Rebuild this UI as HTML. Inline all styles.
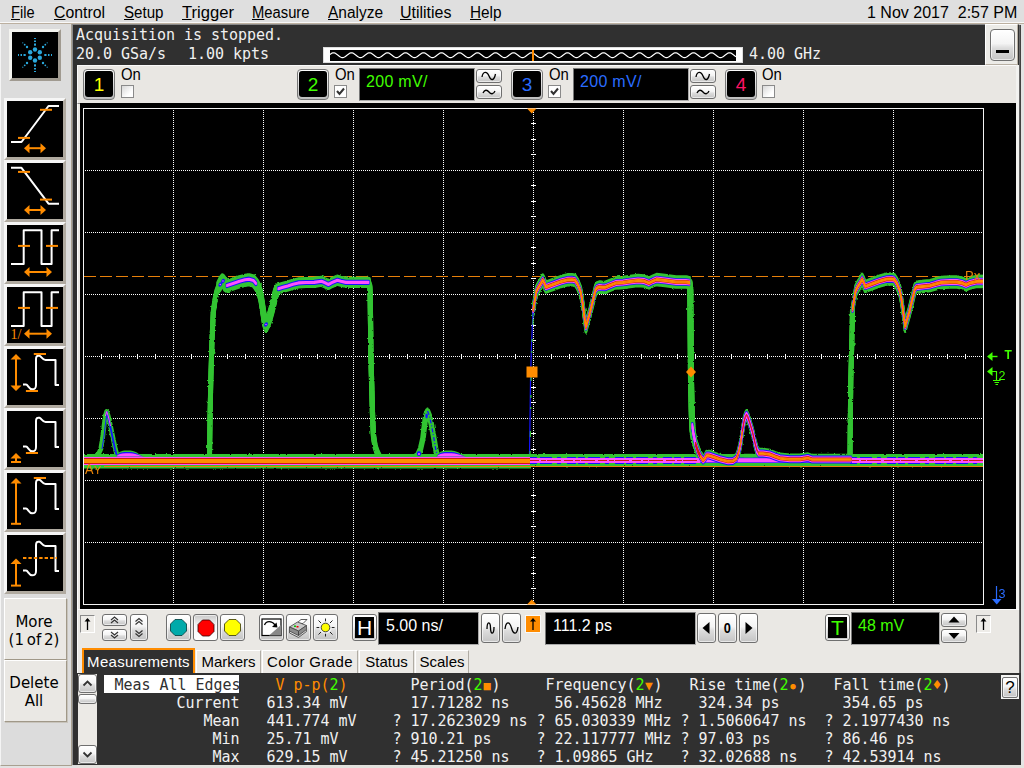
<!DOCTYPE html>
<html lang="en">
<head>
<meta charset="utf-8">
<title>Oscilloscope</title>
<style>
html,body{margin:0;padding:0;}
body{width:1024px;height:768px;overflow:hidden;background:#dcdcdc;position:relative;
 font-family:"Liberation Sans","DejaVu Sans",sans-serif;font-size:16px;color:#000;}
.a{position:absolute;box-sizing:border-box;}
.mono{font-family:"DejaVu Sans Mono","Liberation Mono",monospace;font-size:15px;white-space:pre;letter-spacing:-0.0308px;}
.menu{position:absolute;top:3px;height:20px;line-height:20px;font-size:16px;white-space:nowrap;transform-origin:0 50%;}
.menu u{text-decoration:underline;text-underline-offset:1px;text-decoration-thickness:1px;}
.btn{position:absolute;box-sizing:border-box;border:1px solid #6f6f6f;border-radius:3px;
 background:linear-gradient(#ffffff 0%,#f4f4f4 45%,#dcdcdc 60%,#c4c4c4 100%);box-shadow:inset 0 0 0 1px rgba(255,255,255,.6);}
.chbtn{position:absolute;box-sizing:border-box;width:32px;height:31px;border-radius:4px;border:1px solid #777;
 background:linear-gradient(#fdfdfd,#bdbdbd);}
.chbtn i{position:absolute;left:1px;top:1px;right:1px;bottom:2px;background:#000;border-radius:3px;display:block;
 font-style:normal;text-align:center;font-size:19px;line-height:28px;}
.on{position:absolute;font-size:16px;line-height:16px;transform:scaleX(.93);transform-origin:0 0;margin-top:0px;}
.cb{position:absolute;box-sizing:border-box;width:13px;height:13px;border:1px solid #8a8a8a;background:linear-gradient(135deg,#d8d8d8,#ffffff 70%);}
.cb.ck{background:#fff;}
.vbox{position:absolute;box-sizing:border-box;background:#000;border-top:1px solid #777;border-left:1px solid #777;border-right:1px solid #aaa;border-bottom:1px solid #aaa;
 font-size:16px;line-height:20px;white-space:nowrap;}
.sb{position:absolute;box-sizing:border-box;left:4px;width:62px;height:62px;border-style:solid;border-width:3px;border-color:#f6f6f6 #b0aaa0 #b0aaa0 #f6f6f6;background:#000;}
.tbtn{position:absolute;box-sizing:border-box;left:4px;width:63px;padding-right:3px;border-style:solid;border-width:1px 1px 1px 1px;border-color:#fff #a09888 #a09888 #fff;background:#eae8e4;box-shadow:1px 1px 0 #c8c4bc;
 font-family:"DejaVu Sans","Liberation Sans",sans-serif;font-size:15px;text-align:center;line-height:18px;}
.tab{position:absolute;box-sizing:border-box;top:650px;height:23px;background:#eceae6;border:1px solid #b0aca4;border-bottom:none;border-top-color:#fff;border-left-color:#fff;
 font-size:15px;line-height:21px;text-align:center;white-space:nowrap;}
.sunk{position:absolute;box-sizing:border-box;border-style:solid;border-width:1px;border-color:#8a8a8a #fff #fff #8a8a8a;background:#eeece8;}
.sym{display:inline-block;width:9px;text-align:center;font-size:12px;line-height:10px;vertical-align:baseline}
.g{color:#40ff00}.o{color:#ff8c00}.w{color:#f0f0f0}
</style>
</head>
<body>

<!-- menu bar -->
<div class="a" style="left:0;top:0;width:1024px;height:24px;background:#dfdfdf;border-bottom:1px solid #bcb0a0;"></div><div class="a" style="left:0;top:22px;width:1024px;height:1px;background:#f8f8f8;"></div>
<div class="menu" style="left:11px;transform:scaleX(0.911)"><u>F</u>ile</div>
<div class="menu" style="left:53.5px;transform:scaleX(0.988)"><u>C</u>ontrol</div>
<div class="menu" style="left:123.5px;transform:scaleX(0.945)"><u>S</u>etup</div>
<div class="menu" style="left:181.5px;transform:scaleX(1.038)"><u>T</u>rigger</div>
<div class="menu" style="left:251.5px;transform:scaleX(0.924)"><u>M</u>easure</div>
<div class="menu" style="left:327.5px;transform:scaleX(0.967)"><u>A</u>nalyze</div>
<div class="menu" style="left:400px;transform:scaleX(0.998)"><u>U</u>tilities</div>
<div class="menu" style="left:470px;transform:scaleX(0.957)"><u>H</u>elp</div>
<div class="menu" id="clock" style="left:867px">1 Nov 2017&nbsp; 2:57 PM</div>

<!-- left sidebar -->
<div class="a" style="left:0;top:24px;width:72px;height:742px;background:#dcdcdc;border-left:1px solid #f4f4f4;border-right:1px solid #a8a090;border-bottom:1px solid #a8a090;"></div>
<div class="a" style="left:0;top:766px;width:1024px;height:2px;background:#e2e2e2;"></div>
<div class="a" style="left:72px;top:24px;width:1px;height:741px;background:#8c8c8c;"></div>
<div class="a" style="left:77px;top:65px;width:3px;height:700px;background:#ebe9e5;border-left:1px solid #fcfcfc;"></div>
<div class="a" style="left:73px;top:24px;width:4px;height:741px;background:#303030;"></div>
<!-- logo -->
<div class="a" style="left:9px;top:29px;width:52px;height:52px;border-style:solid;border-width:3px;border-color:#f4f4f0 #a09a90 #a09a90 #f4f4f0;background:#000;">
<svg width="46" height="46" viewBox="0 0 46 46" style="position:absolute;left:0;top:0">
<g fill="#2aa8dc">
<circle cx="23" cy="17.5" r="2.2"/><circle cx="23" cy="28.5" r="2.2"/>
<circle cx="18.2" cy="20.2" r="2.2"/><circle cx="27.8" cy="20.2" r="2.2"/>
<circle cx="18.2" cy="25.8" r="2.2"/><circle cx="27.8" cy="25.8" r="2.2"/>
<rect x="22" y="11.5" width="2" height="2.2"/><rect x="22" y="8.5" width="2" height="1.5"/><rect x="22" y="6" width="2" height="1"/>
<rect x="22" y="32.3" width="2" height="2.2"/><rect x="22" y="36" width="2" height="1.5"/><rect x="22" y="39" width="2" height="1"/>
<rect x="11.5" y="22" width="2.2" height="2"/><rect x="8.5" y="22" width="1.5" height="2"/><rect x="6" y="22" width="1" height="2"/>
<rect x="32.3" y="22" width="2.2" height="2"/><rect x="36" y="22" width="1.5" height="2"/><rect x="39" y="22" width="1" height="2"/>
<circle cx="15" cy="15" r="1.2"/><circle cx="12.7" cy="12.7" r="0.9"/><circle cx="10.8" cy="10.8" r="0.6"/>
<circle cx="31" cy="15" r="1.2"/><circle cx="33.3" cy="12.7" r="0.9"/><circle cx="35.2" cy="10.8" r="0.6"/>
<circle cx="15" cy="31" r="1.2"/><circle cx="12.7" cy="33.3" r="0.9"/><circle cx="10.8" cy="35.2" r="0.6"/>
<circle cx="31" cy="31" r="1.2"/><circle cx="33.3" cy="33.3" r="0.9"/><circle cx="35.2" cy="35.2" r="0.6"/>
</g></svg></div>

<div class="sb" style="top:98px"><svg width="56" height="56" viewBox="0 0 56 56" style="position:absolute;left:0;top:0"><path d="M4 41H14.5L41.5 5H52" stroke="#fff" stroke-width="2" fill="none" stroke-linejoin="round"/><path d="M33 8.8H45" stroke="#ff8c00" stroke-width="2" fill="none"/><path d="M11 36.9H23" stroke="#ff8c00" stroke-width="2" fill="none"/><path d="M21 47.2H35" stroke="#ff8c00" stroke-width="2" fill="none"/><path d="M17 47.2l5.5 -5v10zM39 47.2l-5.5 -5v10z" fill="#ff8c00"/></svg></div>
<div class="sb" style="top:160px"><svg width="56" height="56" viewBox="0 0 56 56" style="position:absolute;left:0;top:0"><path d="M4 4.8H14.5L41.5 40.7H52" stroke="#fff" stroke-width="2" fill="none" stroke-linejoin="round"/><path d="M11 8.9H23" stroke="#ff8c00" stroke-width="2" fill="none"/><path d="M33 36.6H45" stroke="#ff8c00" stroke-width="2" fill="none"/><path d="M21 47H35" stroke="#ff8c00" stroke-width="2" fill="none"/><path d="M17 47l5.5 -5v10zM39 47l-5.5 -5v10z" fill="#ff8c00"/></svg></div>
<div class="sb" style="top:222px"><svg width="56" height="56" viewBox="0 0 56 56" style="position:absolute;left:0;top:0"><path d="M4 39H16.7V5.2H34.5V39H44.6V5.2H52" stroke="#fff" stroke-width="2" fill="none" stroke-linejoin="round"/><path d="M11 20.9H23" stroke="#ff8c00" stroke-width="2" fill="none"/><path d="M39 20.9H51" stroke="#ff8c00" stroke-width="2" fill="none"/><path d="M21 47H41" stroke="#ff8c00" stroke-width="2" fill="none"/><path d="M17 47l5.5 -5v10zM45 47l-5.5 -5v10z" fill="#ff8c00"/></svg></div>
<div class="sb" style="top:284px"><svg width="56" height="56" viewBox="0 0 56 56" style="position:absolute;left:0;top:0"><path d="M4 39H16.7V5.2H34.5V39H44.6V5.2H52" stroke="#fff" stroke-width="2" fill="none" stroke-linejoin="round"/><path d="M11 20.9H23" stroke="#ff8c00" stroke-width="2" fill="none"/><path d="M39 20.9H51" stroke="#ff8c00" stroke-width="2" fill="none"/><path d="M21 46.7H41" stroke="#ff8c00" stroke-width="2" fill="none"/><path d="M17 46.7l5.5 -5v10zM45 46.7l-5.5 -5v10z" fill="#ff8c00"/><text x="3.5" y="51.5" font-family="Liberation Serif,serif" font-size="14" fill="#ff8c00">1/</text></svg></div>
<div class="sb" style="top:346px"><svg width="56" height="56" viewBox="0 0 56 56" style="position:absolute;left:0;top:0"><path d="M16 35.6H19C21 35.6 22 40.3 25 40.3C28 40.3 29 39.5 29 36V10C29 7 30.5 6.3 32.5 6.8C34.5 7.3 35.5 11 38.5 11H48.5V36H52" stroke="#fff" stroke-width="2" fill="none" stroke-linejoin="round"/><path d="M26.8 5H39" stroke="#ff8c00" stroke-width="2" fill="none"/><path d="M18.9 42H31" stroke="#ff8c00" stroke-width="2" fill="none"/><path d="M9 8V39" stroke="#ff8c00" stroke-width="2" fill="none"/><path d="M9 5l5.5 5.5h-11zM9 42l5.5 -5.5h-11z" fill="#ff8c00"/></svg></div>
<div class="sb" style="top:408px"><svg width="56" height="56" viewBox="0 0 56 56" style="position:absolute;left:0;top:0"><path d="M16 35.6H19C21 35.6 22 40.3 25 40.3C28 40.3 29 39.5 29 36V10C29 7 30.5 6.3 32.5 6.8C34.5 7.3 35.5 11 38.5 11H48.5V36H52" stroke="#fff" stroke-width="2" fill="none" stroke-linejoin="round"/><path d="M18.9 42H31" stroke="#ff8c00" stroke-width="2" fill="none"/><path d="M9 45V51" stroke="#ff8c00" stroke-width="2" fill="none"/><path d="M9 42l5.5 5.5h-11z" fill="#ff8c00"/><path d="M4 51h10" stroke="#ff8c00" stroke-width="2" fill="none"/></svg></div>
<div class="sb" style="top:470px"><svg width="56" height="56" viewBox="0 0 56 56" style="position:absolute;left:0;top:0"><path d="M16 35.6H19C21 35.6 22 40.3 25 40.3C28 40.3 29 39.5 29 36V10C29 7 30.5 6.3 32.5 6.8C34.5 7.3 35.5 11 38.5 11H48.5V36H52" stroke="#fff" stroke-width="2" fill="none" stroke-linejoin="round"/><path d="M26.8 5H39" stroke="#ff8c00" stroke-width="2" fill="none"/><path d="M9 8V50.8" stroke="#ff8c00" stroke-width="2" fill="none"/><path d="M9 5l5.5 5.5h-11z" fill="#ff8c00"/><path d="M4 50.8h10" stroke="#ff8c00" stroke-width="2" fill="none"/></svg></div>
<div class="sb" style="top:532px"><svg width="56" height="56" viewBox="0 0 56 56" style="position:absolute;left:0;top:0"><path d="M16 35.6H19C21 35.6 22 40.3 25 40.3C28 40.3 29 39.5 29 36V10C29 7 30.5 6.3 32.5 6.8C34.5 7.3 35.5 11 38.5 11H48.5V36H52" stroke="#fff" stroke-width="2" fill="none" stroke-linejoin="round"/><path d="M16 23H50" stroke="#ff8c00" stroke-width="2" stroke-dasharray="3.4 2" fill="none"/><path d="M9 26.5V50.6" stroke="#ff8c00" stroke-width="2" fill="none"/><path d="M9 23.5l5.5 5.5h-11z" fill="#ff8c00"/><path d="M4 50.6h10" stroke="#ff8c00" stroke-width="2" fill="none"/></svg></div>
<!-- More / Delete buttons -->
<div class="tbtn" style="top:598px;height:62px;padding-top:14px;line-height:18px;word-spacing:-2px">More<br>(1 of 2)</div>
<div class="tbtn" style="top:660px;height:62px;padding-top:13px;line-height:18px">Delete<br>All</div>

<!-- status area -->
<div class="a" style="left:73px;top:24px;width:946px;height:41px;background:#303030;border-top:1px solid #8a8a8a;"></div>
<div class="a mono w" style="left:76px;top:26px;line-height:19px;">Acquisition is stopped.
20.0 GSa/s</div>
<div class="a mono w" style="left:188px;top:45px;line-height:19px;">1.00 kpts</div>
<div class="a" style="left:323px;top:47px;width:420px;height:16px;background:#fff;border:1px solid #ddd;"></div>
<div class="a" style="left:330px;top:50px;width:406px;height:11px;background:#000;overflow:hidden">
<svg width="406" height="11" viewBox="0 0 406 11" style="position:absolute;left:0;top:0"><path d="M0 4.4 L1 3.7 L2 3.1 L3 2.8 L4 2.8 L5 3.1 L6 3.7 L7 4.4 L8 5.2 L9 6.0 L10 6.7 L11 7.3 L12 7.6 L13 7.6 L14 7.3 L15 6.7 L16 6.0 L17 5.2 L18 4.4 L19 3.7 L20 3.1 L21 2.8 L22 2.8 L23 3.1 L24 3.7 L25 4.4 L26 5.2 L27 6.0 L28 6.7 L29 7.3 L30 7.6 L31 7.6 L32 7.3 L33 6.7 L34 6.0 L35 5.2 L36 4.4 L37 3.7 L38 3.1 L39 2.8 L40 2.8 L41 3.1 L42 3.7 L43 4.4 L44 5.2 L45 6.0 L46 6.7 L47 7.3 L48 7.6 L49 7.6 L50 7.3 L51 6.7 L52 6.0 L53 5.2 L54 4.4 L55 3.7 L56 3.1 L57 2.8 L58 2.8 L59 3.1 L60 3.7 L61 4.4 L62 5.2 L63 6.0 L64 6.7 L65 7.3 L66 7.6 L67 7.6 L68 7.3 L69 6.7 L70 6.0 L71 5.2 L72 4.4 L73 3.7 L74 3.1 L75 2.8 L76 2.8 L77 3.1 L78 3.7 L79 4.4 L80 5.2 L81 6.0 L82 6.7 L83 7.3 L84 7.6 L85 7.6 L86 7.3 L87 6.7 L88 6.0 L89 5.2 L90 4.4 L91 3.7 L92 3.1 L93 2.8 L94 2.8 L95 3.1 L96 3.7 L97 4.4 L98 5.2 L99 6.0 L100 6.7 L101 7.3 L102 7.6 L103 7.6 L104 7.3 L105 6.7 L106 6.0 L107 5.2 L108 4.4 L109 3.7 L110 3.1 L111 2.8 L112 2.8 L113 3.1 L114 3.7 L115 4.4 L116 5.2 L117 6.0 L118 6.7 L119 7.3 L120 7.6 L121 7.6 L122 7.3 L123 6.7 L124 6.0 L125 5.2 L126 4.4 L127 3.7 L128 3.1 L129 2.8 L130 2.8 L131 3.1 L132 3.7 L133 4.4 L134 5.2 L135 6.0 L136 6.7 L137 7.3 L138 7.6 L139 7.6 L140 7.3 L141 6.7 L142 6.0 L143 5.2 L144 4.4 L145 3.7 L146 3.1 L147 2.8 L148 2.8 L149 3.1 L150 3.7 L151 4.4 L152 5.2 L153 6.0 L154 6.7 L155 7.3 L156 7.6 L157 7.6 L158 7.3 L159 6.7 L160 6.0 L161 5.2 L162 4.4 L163 3.7 L164 3.1 L165 2.8 L166 2.8 L167 3.1 L168 3.7 L169 4.4 L170 5.2 L171 6.0 L172 6.7 L173 7.3 L174 7.6 L175 7.6 L176 7.3 L177 6.7 L178 6.0 L179 5.2 L180 4.4 L181 3.7 L182 3.1 L183 2.8 L184 2.8 L185 3.1 L186 3.7 L187 4.4 L188 5.2 L189 6.0 L190 6.7 L191 7.3 L192 7.6 L193 7.6 L194 7.3 L195 6.7 L196 6.0 L197 5.2 L198 4.4 L199 3.7 L200 3.1 L201 2.8 L202 2.8 L203 3.1 L204 3.7 L205 4.4 L206 5.2 L207 6.0 L208 6.7 L209 7.3 L210 7.6 L211 7.6 L212 7.3 L213 6.7 L214 6.0 L215 5.2 L216 4.4 L217 3.7 L218 3.1 L219 2.8 L220 2.8 L221 3.1 L222 3.7 L223 4.4 L224 5.2 L225 6.0 L226 6.7 L227 7.3 L228 7.6 L229 7.6 L230 7.3 L231 6.7 L232 6.0 L233 5.2 L234 4.4 L235 3.7 L236 3.1 L237 2.8 L238 2.8 L239 3.1 L240 3.7 L241 4.4 L242 5.2 L243 6.0 L244 6.7 L245 7.3 L246 7.6 L247 7.6 L248 7.3 L249 6.7 L250 6.0 L251 5.2 L252 4.4 L253 3.7 L254 3.1 L255 2.8 L256 2.8 L257 3.1 L258 3.7 L259 4.4 L260 5.2 L261 6.0 L262 6.7 L263 7.3 L264 7.6 L265 7.6 L266 7.3 L267 6.7 L268 6.0 L269 5.2 L270 4.4 L271 3.7 L272 3.1 L273 2.8 L274 2.8 L275 3.1 L276 3.7 L277 4.4 L278 5.2 L279 6.0 L280 6.7 L281 7.3 L282 7.6 L283 7.6 L284 7.3 L285 6.7 L286 6.0 L287 5.2 L288 4.4 L289 3.7 L290 3.1 L291 2.8 L292 2.8 L293 3.1 L294 3.7 L295 4.4 L296 5.2 L297 6.0 L298 6.7 L299 7.3 L300 7.6 L301 7.6 L302 7.3 L303 6.7 L304 6.0 L305 5.2 L306 4.4 L307 3.7 L308 3.1 L309 2.8 L310 2.8 L311 3.1 L312 3.7 L313 4.4 L314 5.2 L315 6.0 L316 6.7 L317 7.3 L318 7.6 L319 7.6 L320 7.3 L321 6.7 L322 6.0 L323 5.2 L324 4.4 L325 3.7 L326 3.1 L327 2.8 L328 2.8 L329 3.1 L330 3.7 L331 4.4 L332 5.2 L333 6.0 L334 6.7 L335 7.3 L336 7.6 L337 7.6 L338 7.3 L339 6.7 L340 6.0 L341 5.2 L342 4.4 L343 3.7 L344 3.1 L345 2.8 L346 2.8 L347 3.1 L348 3.7 L349 4.4 L350 5.2 L351 6.0 L352 6.7 L353 7.3 L354 7.6 L355 7.6 L356 7.3 L357 6.7 L358 6.0 L359 5.2 L360 4.4 L361 3.7 L362 3.1 L363 2.8 L364 2.8 L365 3.1 L366 3.7 L367 4.4 L368 5.2 L369 6.0 L370 6.7 L371 7.3 L372 7.6 L373 7.6 L374 7.3 L375 6.7 L376 6.0 L377 5.2 L378 4.4 L379 3.7 L380 3.1 L381 2.8 L382 2.8 L383 3.1 L384 3.7 L385 4.4 L386 5.2 L387 6.0 L388 6.7 L389 7.3 L390 7.6 L391 7.6 L392 7.3 L393 6.7 L394 6.0 L395 5.2 L396 4.4 L397 3.7 L398 3.1 L399 2.8 L400 2.8 L401 3.1 L402 3.7 L403 4.4 L404 5.2 L405 6.0 L406 6.7" stroke="#fff" stroke-width="1.2" fill="none"/><rect x="202" y="0" width="2" height="11" fill="#ff8c00"/></svg></div>
<div class="a mono w" style="left:749px;top:45px;line-height:19px;">4.00 GHz</div>
<!-- minimize button -->
<div class="a" style="left:985px;top:24px;width:33px;height:41px;background:#ecebe7;border:1px solid #b8b0a4;border-top-color:#fff;border-left-color:#fff"></div>
<div class="btn" style="left:990px;top:29px;width:25px;height:32px;border-radius:4px"><div class="a" style="left:5px;top:20px;width:13px;height:3px;background:#000"></div></div>
<!-- right edge strips -->
<div class="a" style="left:1016px;top:65px;width:3px;height:703px;background:#f2f2f0;"></div>
<div class="a" style="left:1019px;top:25px;width:2px;height:740px;background:linear-gradient(90deg,#777,#303030);"></div>
<div class="a" style="left:1021px;top:24px;width:3px;height:744px;background:#e4e4e4;"></div>

<!-- channel row -->
<div class="a" style="left:77px;top:65px;width:939px;height:39px;background:#e9e7e3;border-top:1px solid #fafafa;border-left:1px solid #fafafa;border-bottom:1px solid #888;"></div>
<div class="chbtn" style="left:83px;top:69px"><i style="color:#ffff00">1</i></div>
<div class="on" style="left:121px;top:67px">On</div><div class="cb" style="left:121px;top:85px"></div>

<div class="chbtn" style="left:297px;top:69px"><i class="g">2</i></div>
<div class="on" style="left:334.5px;top:67px">On</div><div class="cb ck" style="left:334px;top:85px"><svg width="11" height="11" viewBox="0 0 11 11" style="position:absolute;left:0;top:0"><path d="M2 5l2.5 3L9 2.5" stroke="#333" stroke-width="2" fill="none"/></svg></div>
<div class="vbox g" style="left:359px;top:68px;width:116px;height:33px;padding:3px 0 0 6px;letter-spacing:.3px">200 mV/</div>
<div class="btn" style="left:476px;top:69px;width:26px;height:14px"><svg width="24" height="12" viewBox="0 0 24 12" style="position:absolute;left:0;top:0"><path d="M5 7C6 1 10 1 12 6C14 11 17 11 18.5 4" stroke="#000" stroke-width="1.3" fill="none"/></svg></div>
<div class="btn" style="left:476px;top:85px;width:26px;height:14px"><svg width="24" height="12" viewBox="0 0 24 12" style="position:absolute;left:0;top:0"><path d="M6 7C7.5 3.5 10 3.5 12 6C14 8.5 16.5 8.5 18 5" stroke="#000" stroke-width="1.3" fill="none"/></svg></div>

<div class="chbtn" style="left:511px;top:69px"><i style="color:#2a6cff">3</i></div>
<div class="on" style="left:548.5px;top:67px">On</div><div class="cb ck" style="left:548px;top:85px"><svg width="11" height="11" viewBox="0 0 11 11" style="position:absolute;left:0;top:0"><path d="M2 5l2.5 3L9 2.5" stroke="#333" stroke-width="2" fill="none"/></svg></div>
<div class="vbox" style="left:573px;top:68px;width:116px;height:33px;padding:3px 0 0 6px;color:#2a6cff;letter-spacing:.3px">200 mV/</div>
<div class="btn" style="left:690px;top:69px;width:26px;height:14px"><svg width="24" height="12" viewBox="0 0 24 12" style="position:absolute;left:0;top:0"><path d="M5 7C6 1 10 1 12 6C14 11 17 11 18.5 4" stroke="#000" stroke-width="1.3" fill="none"/></svg></div>
<div class="btn" style="left:690px;top:85px;width:26px;height:14px"><svg width="24" height="12" viewBox="0 0 24 12" style="position:absolute;left:0;top:0"><path d="M6 7C7.5 3.5 10 3.5 12 6C14 8.5 16.5 8.5 18 5" stroke="#000" stroke-width="1.3" fill="none"/></svg></div>

<div class="chbtn" style="left:725px;top:69px"><i style="color:#ff1464">4</i></div>
<div class="on" style="left:762px;top:67px">On</div><div class="cb" style="left:762px;top:85px"></div>

<svg class="a" style="left:80px;top:103px" width="936" height="506" viewBox="80 103 936 506" shape-rendering="auto">
<defs><clipPath id="gc"><rect x="84" y="109" width="899" height="495"/></clipPath><filter id="rough" x="-2%" y="-2%" width="104%" height="104%"><feTurbulence type="fractalNoise" baseFrequency="0.35" numOctaves="2" seed="3" result="n"/><feDisplacementMap in="SourceGraphic" in2="n" scale="2.4" xChannelSelector="R" yChannelSelector="G"/></filter></defs>
<rect x="80" y="103" width="936" height="506" fill="#000"/>
<g stroke="#ffffff" stroke-width="1" stroke-dasharray="1 1" fill="none" shape-rendering="crispEdges"><path d="M173.5 108V604"/><path d="M263.5 108V604"/><path d="M353.5 108V604"/><path d="M443.5 108V604"/><path d="M533.5 108V604"/><path d="M623.5 108V604"/><path d="M713.5 108V604"/><path d="M803.5 108V604"/><path d="M893.5 108V604"/><path d="M83 170.5H983"/><path d="M83 232.5H983"/><path d="M83 294.5H983"/><path d="M83 356.5H983"/><path d="M83 418.5H983"/><path d="M83 480.5H983"/><path d="M83 542.5H983"/></g>
<g stroke="#ffffff" stroke-width="1" fill="none" shape-rendering="crispEdges"><path d="M101.5 354V359"/><path d="M119.5 354V359"/><path d="M137.5 354V359"/><path d="M155.5 354V359"/><path d="M191.5 354V359"/><path d="M209.5 354V359"/><path d="M227.5 354V359"/><path d="M245.5 354V359"/><path d="M281.5 354V359"/><path d="M299.5 354V359"/><path d="M317.5 354V359"/><path d="M335.5 354V359"/><path d="M371.5 354V359"/><path d="M389.5 354V359"/><path d="M407.5 354V359"/><path d="M425.5 354V359"/><path d="M461.5 354V359"/><path d="M479.5 354V359"/><path d="M497.5 354V359"/><path d="M515.5 354V359"/><path d="M551.5 354V359"/><path d="M569.5 354V359"/><path d="M587.5 354V359"/><path d="M605.5 354V359"/><path d="M641.5 354V359"/><path d="M659.5 354V359"/><path d="M677.5 354V359"/><path d="M695.5 354V359"/><path d="M731.5 354V359"/><path d="M749.5 354V359"/><path d="M767.5 354V359"/><path d="M785.5 354V359"/><path d="M821.5 354V359"/><path d="M839.5 354V359"/><path d="M857.5 354V359"/><path d="M875.5 354V359"/><path d="M911.5 354V359"/><path d="M929.5 354V359"/><path d="M947.5 354V359"/><path d="M965.5 354V359"/><path d="M531 123.5H536"/><path d="M531 139.5H536"/><path d="M531 154.5H536"/><path d="M531 185.5H536"/><path d="M531 201.5H536"/><path d="M531 216.5H536"/><path d="M531 247.5H536"/><path d="M531 263.5H536"/><path d="M531 278.5H536"/><path d="M531 309.5H536"/><path d="M531 325.5H536"/><path d="M531 340.5H536"/><path d="M531 371.5H536"/><path d="M531 387.5H536"/><path d="M531 402.5H536"/><path d="M531 433.5H536"/><path d="M531 449.5H536"/><path d="M531 464.5H536"/><path d="M531 495.5H536"/><path d="M531 511.5H536"/><path d="M531 526.5H536"/><path d="M531 557.5H536"/><path d="M531 573.5H536"/><path d="M531 588.5H536"/></g>
<rect x="83.5" y="108.5" width="900" height="496" fill="none" stroke="#f4f4f4" stroke-width="1" shape-rendering="crispEdges"/>
<path d="M84 276.5H983" stroke="#e8800a" stroke-width="1" stroke-dasharray="12 4" shape-rendering="crispEdges"/>
<g clip-path="url(#gc)">
<g filter="url(#rough)">
<rect x="80" y="454" width="451" height="14.5" fill="#33c433"/>
<rect x="529" y="454" width="172" height="12.5" fill="#33c433"/>
<rect x="849" y="454" width="140" height="12.500" fill="#33c433"/>
<rect x="699" y="454" width="152" height="12.5" fill="#33c433"/>
<g stroke="#33c433" stroke-width="2.6" fill="none" stroke-linejoin="round" stroke-linecap="round" ><path d="M692.3 426 L693.5 434 L695.5 444 L698 451.5 L700.5 456.5 L703 460.5 L705 458.5 L706.5 455.5 L709 455.5 L712 456.5 L720 459.3 L728 461.3 L733 461 L736.5 458.5 L738.5 453 L740.5 444 L742.3 432 L744 421.5 L745.3 417 L746.5 414.8 L747.8 417 L749.8 423 L752.5 432 L755 443 L757 450.5 L759 453.5 L763 453.5 L770 454.5 L775 456.5 L780 458.3 L790 459.3 L800 459.3 L808 458 L812 459.5 L830 459.5 L851 459.5" transform="translate(0 -4.4)"/><path d="M692.3 426 L693.5 434 L695.5 444 L698 451.5 L700.5 456.5 L703 460.5 L705 458.5 L706.5 455.5 L709 455.5 L712 456.5 L720 459.3 L728 461.3 L733 461 L736.5 458.5 L738.5 453 L740.5 444 L742.3 432 L744 421.5 L745.3 417 L746.5 414.8 L747.8 417 L749.8 423 L752.5 432 L755 443 L757 450.5 L759 453.5 L763 453.5 L770 454.5 L775 456.5 L780 458.3 L790 459.3 L800 459.3 L808 458 L812 459.5 L830 459.5 L851 459.5" transform="translate(0 -3.42222)"/><path d="M692.3 426 L693.5 434 L695.5 444 L698 451.5 L700.5 456.5 L703 460.5 L705 458.5 L706.5 455.5 L709 455.5 L712 456.5 L720 459.3 L728 461.3 L733 461 L736.5 458.5 L738.5 453 L740.5 444 L742.3 432 L744 421.5 L745.3 417 L746.5 414.8 L747.8 417 L749.8 423 L752.5 432 L755 443 L757 450.5 L759 453.5 L763 453.5 L770 454.5 L775 456.5 L780 458.3 L790 459.3 L800 459.3 L808 458 L812 459.5 L830 459.5 L851 459.5" transform="translate(0 -2.44444)"/><path d="M692.3 426 L693.5 434 L695.5 444 L698 451.5 L700.5 456.5 L703 460.5 L705 458.5 L706.5 455.5 L709 455.5 L712 456.5 L720 459.3 L728 461.3 L733 461 L736.5 458.5 L738.5 453 L740.5 444 L742.3 432 L744 421.5 L745.3 417 L746.5 414.8 L747.8 417 L749.8 423 L752.5 432 L755 443 L757 450.5 L759 453.5 L763 453.5 L770 454.5 L775 456.5 L780 458.3 L790 459.3 L800 459.3 L808 458 L812 459.5 L830 459.5 L851 459.5" transform="translate(0 -1.46667)"/><path d="M692.3 426 L693.5 434 L695.5 444 L698 451.5 L700.5 456.5 L703 460.5 L705 458.5 L706.5 455.5 L709 455.5 L712 456.5 L720 459.3 L728 461.3 L733 461 L736.5 458.5 L738.5 453 L740.5 444 L742.3 432 L744 421.5 L745.3 417 L746.5 414.8 L747.8 417 L749.8 423 L752.5 432 L755 443 L757 450.5 L759 453.5 L763 453.5 L770 454.5 L775 456.5 L780 458.3 L790 459.3 L800 459.3 L808 458 L812 459.5 L830 459.5 L851 459.5" transform="translate(0 -0.488889)"/><path d="M692.3 426 L693.5 434 L695.5 444 L698 451.5 L700.5 456.5 L703 460.5 L705 458.5 L706.5 455.5 L709 455.5 L712 456.5 L720 459.3 L728 461.3 L733 461 L736.5 458.5 L738.5 453 L740.5 444 L742.3 432 L744 421.5 L745.3 417 L746.5 414.8 L747.8 417 L749.8 423 L752.5 432 L755 443 L757 450.5 L759 453.5 L763 453.5 L770 454.5 L775 456.5 L780 458.3 L790 459.3 L800 459.3 L808 458 L812 459.5 L830 459.5 L851 459.5" transform="translate(0 0.488889)"/><path d="M692.3 426 L693.5 434 L695.5 444 L698 451.5 L700.5 456.5 L703 460.5 L705 458.5 L706.5 455.5 L709 455.5 L712 456.5 L720 459.3 L728 461.3 L733 461 L736.5 458.5 L738.5 453 L740.5 444 L742.3 432 L744 421.5 L745.3 417 L746.5 414.8 L747.8 417 L749.8 423 L752.5 432 L755 443 L757 450.5 L759 453.5 L763 453.5 L770 454.5 L775 456.5 L780 458.3 L790 459.3 L800 459.3 L808 458 L812 459.5 L830 459.5 L851 459.5" transform="translate(0 1.46667)"/><path d="M692.3 426 L693.5 434 L695.5 444 L698 451.5 L700.5 456.5 L703 460.5 L705 458.5 L706.5 455.5 L709 455.5 L712 456.5 L720 459.3 L728 461.3 L733 461 L736.5 458.5 L738.5 453 L740.5 444 L742.3 432 L744 421.5 L745.3 417 L746.5 414.8 L747.8 417 L749.8 423 L752.5 432 L755 443 L757 450.5 L759 453.5 L763 453.5 L770 454.5 L775 456.5 L780 458.3 L790 459.3 L800 459.3 L808 458 L812 459.5 L830 459.5 L851 459.5" transform="translate(0 2.44444)"/><path d="M692.3 426 L693.5 434 L695.5 444 L698 451.5 L700.5 456.5 L703 460.5 L705 458.5 L706.5 455.5 L709 455.5 L712 456.5 L720 459.3 L728 461.3 L733 461 L736.5 458.5 L738.5 453 L740.5 444 L742.3 432 L744 421.5 L745.3 417 L746.5 414.8 L747.8 417 L749.8 423 L752.5 432 L755 443 L757 450.5 L759 453.5 L763 453.5 L770 454.5 L775 456.5 L780 458.3 L790 459.3 L800 459.3 L808 458 L812 459.5 L830 459.5 L851 459.5" transform="translate(0 3.42222)"/><path d="M692.3 426 L693.5 434 L695.5 444 L698 451.5 L700.5 456.5 L703 460.5 L705 458.5 L706.5 455.5 L709 455.5 L712 456.5 L720 459.3 L728 461.3 L733 461 L736.5 458.5 L738.5 453 L740.5 444 L742.3 432 L744 421.5 L745.3 417 L746.5 414.8 L747.8 417 L749.8 423 L752.5 432 L755 443 L757 450.5 L759 453.5 L763 453.5 L770 454.5 L775 456.5 L780 458.3 L790 459.3 L800 459.3 L808 458 L812 459.5 L830 459.5 L851 459.5" transform="translate(0 4.4)"/></g>
<path d="M94 457 L98.5 454 L100.8 449 L102.6 438 L104 426 L105.4 416 L106.7 411.5 L108.2 416 L110.5 426 L113 438 L115.3 449 L117 455" stroke="#33c433" stroke-width="4.8" fill="none" stroke-linejoin="round"/>
<path d="M414 457 L418 454.5 L420.5 449 L423 438 L424.5 425 L426 414.5 L427.5 411 L429.5 416 L431.5 425 L433.5 436 L435.5 448 L437 455" stroke="#33c433" stroke-width="5.6" fill="none" stroke-linejoin="round"/>
<path d="M427.5 411V407.5" stroke="#33c433" stroke-width="1.5"/>
<g stroke="#33c433" stroke-width="5" fill="none" stroke-linejoin="round" stroke-linecap="round" ><path d="M209.5 456 L210 420 L210.8 380 L212 340 L213.3 312 L215 300 L217 291 L219 285.5" transform="translate(0 -1)"/><path d="M209.5 456 L210 420 L210.8 380 L212 340 L213.3 312 L215 300 L217 291 L219 285.5" transform="translate(0 0)"/><path d="M209.5 456 L210 420 L210.8 380 L212 340 L213.3 312 L215 300 L217 291 L219 285.5" transform="translate(0 1)"/></g>
<g stroke="#33c433" stroke-width="5" fill="none" stroke-linejoin="round" stroke-linecap="round" ><path d="M219 286.1 L221 282.1 L222.5 280.1 L224 282.1 L225.5 285.6 L227 286.1 L233 284.1 L239.5 281.8 L245 280.4 L249 279.8 L253.5 281.1 L256 284.1 L259 289.6 L261 297.6 L263 310.6 L264.5 320.6 L266 325.6 L268 321.6 L270 315.6 L272 308.6 L274 300.6 L275.5 293.6 L277 290.1" transform="translate(0 -4.1)"/><path d="M219 286.1 L221 282.1 L222.5 280.1 L224 282.1 L225.5 285.6 L227 286.1 L233 284.1 L239.5 281.8 L245 280.4 L249 279.8 L253.5 281.1 L256 284.1 L259 289.6 L261 297.6 L263 310.6 L264.5 320.6 L266 325.6 L268 321.6 L270 315.6 L272 308.6 L274 300.6 L275.5 293.6 L277 290.1" transform="translate(0 -3.075)"/><path d="M219 286.1 L221 282.1 L222.5 280.1 L224 282.1 L225.5 285.6 L227 286.1 L233 284.1 L239.5 281.8 L245 280.4 L249 279.8 L253.5 281.1 L256 284.1 L259 289.6 L261 297.6 L263 310.6 L264.5 320.6 L266 325.6 L268 321.6 L270 315.6 L272 308.6 L274 300.6 L275.5 293.6 L277 290.1" transform="translate(0 -2.05)"/><path d="M219 286.1 L221 282.1 L222.5 280.1 L224 282.1 L225.5 285.6 L227 286.1 L233 284.1 L239.5 281.8 L245 280.4 L249 279.8 L253.5 281.1 L256 284.1 L259 289.6 L261 297.6 L263 310.6 L264.5 320.6 L266 325.6 L268 321.6 L270 315.6 L272 308.6 L274 300.6 L275.5 293.6 L277 290.1" transform="translate(0 -1.025)"/><path d="M219 286.1 L221 282.1 L222.5 280.1 L224 282.1 L225.5 285.6 L227 286.1 L233 284.1 L239.5 281.8 L245 280.4 L249 279.8 L253.5 281.1 L256 284.1 L259 289.6 L261 297.6 L263 310.6 L264.5 320.6 L266 325.6 L268 321.6 L270 315.6 L272 308.6 L274 300.6 L275.5 293.6 L277 290.1" transform="translate(0 0)"/><path d="M219 286.1 L221 282.1 L222.5 280.1 L224 282.1 L225.5 285.6 L227 286.1 L233 284.1 L239.5 281.8 L245 280.4 L249 279.8 L253.5 281.1 L256 284.1 L259 289.6 L261 297.6 L263 310.6 L264.5 320.6 L266 325.6 L268 321.6 L270 315.6 L272 308.6 L274 300.6 L275.5 293.6 L277 290.1" transform="translate(0 1.025)"/><path d="M219 286.1 L221 282.1 L222.5 280.1 L224 282.1 L225.5 285.6 L227 286.1 L233 284.1 L239.5 281.8 L245 280.4 L249 279.8 L253.5 281.1 L256 284.1 L259 289.6 L261 297.6 L263 310.6 L264.5 320.6 L266 325.6 L268 321.6 L270 315.6 L272 308.6 L274 300.6 L275.5 293.6 L277 290.1" transform="translate(0 2.05)"/><path d="M219 286.1 L221 282.1 L222.5 280.1 L224 282.1 L225.5 285.6 L227 286.1 L233 284.1 L239.5 281.8 L245 280.4 L249 279.8 L253.5 281.1 L256 284.1 L259 289.6 L261 297.6 L263 310.6 L264.5 320.6 L266 325.6 L268 321.6 L270 315.6 L272 308.6 L274 300.6 L275.5 293.6 L277 290.1" transform="translate(0 3.075)"/><path d="M219 286.1 L221 282.1 L222.5 280.1 L224 282.1 L225.5 285.6 L227 286.1 L233 284.1 L239.5 281.8 L245 280.4 L249 279.8 L253.5 281.1 L256 284.1 L259 289.6 L261 297.6 L263 310.6 L264.5 320.6 L266 325.6 L268 321.6 L270 315.6 L272 308.6 L274 300.6 L275.5 293.6 L277 290.1" transform="translate(0 4.1)"/></g>
<g stroke="#33c433" stroke-width="4.8" fill="none" stroke-linejoin="round" stroke-linecap="round" ><path d="M277 289.5 L278.3 288.7 L283 287.3 L287.8 286 L293 284.3 L298.4 282.9 L306 282.5 L314.2 282.4 L321.6 281.3 L325 282.8 L328.4 284.5 L332 282.5 L337.4 280.2 L341 281.3 L345.8 282.4 L359.6 282.4 L368.5 282.4" transform="translate(0 -3.2)"/><path d="M277 289.5 L278.3 288.7 L283 287.3 L287.8 286 L293 284.3 L298.4 282.9 L306 282.5 L314.2 282.4 L321.6 281.3 L325 282.8 L328.4 284.5 L332 282.5 L337.4 280.2 L341 281.3 L345.8 282.4 L359.6 282.4 L368.5 282.4" transform="translate(0 -2.13333)"/><path d="M277 289.5 L278.3 288.7 L283 287.3 L287.8 286 L293 284.3 L298.4 282.9 L306 282.5 L314.2 282.4 L321.6 281.3 L325 282.8 L328.4 284.5 L332 282.5 L337.4 280.2 L341 281.3 L345.8 282.4 L359.6 282.4 L368.5 282.4" transform="translate(0 -1.06667)"/><path d="M277 289.5 L278.3 288.7 L283 287.3 L287.8 286 L293 284.3 L298.4 282.9 L306 282.5 L314.2 282.4 L321.6 281.3 L325 282.8 L328.4 284.5 L332 282.5 L337.4 280.2 L341 281.3 L345.8 282.4 L359.6 282.4 L368.5 282.4" transform="translate(0 4.44089e-16)"/><path d="M277 289.5 L278.3 288.7 L283 287.3 L287.8 286 L293 284.3 L298.4 282.9 L306 282.5 L314.2 282.4 L321.6 281.3 L325 282.8 L328.4 284.5 L332 282.5 L337.4 280.2 L341 281.3 L345.8 282.4 L359.6 282.4 L368.5 282.4" transform="translate(0 1.06667)"/><path d="M277 289.5 L278.3 288.7 L283 287.3 L287.8 286 L293 284.3 L298.4 282.9 L306 282.5 L314.2 282.4 L321.6 281.3 L325 282.8 L328.4 284.5 L332 282.5 L337.4 280.2 L341 281.3 L345.8 282.4 L359.6 282.4 L368.5 282.4" transform="translate(0 2.13333)"/><path d="M277 289.5 L278.3 288.7 L283 287.3 L287.8 286 L293 284.3 L298.4 282.9 L306 282.5 L314.2 282.4 L321.6 281.3 L325 282.8 L328.4 284.5 L332 282.5 L337.4 280.2 L341 281.3 L345.8 282.4 L359.6 282.4 L368.5 282.4" transform="translate(0 3.2)"/></g>
<g stroke="#33c433" stroke-width="5.2" fill="none" stroke-linejoin="round" stroke-linecap="round" ><path d="M368.5 282.4 L369.7 286 L370.2 295 L370.5 320 L371 360 L372 396 L372.7 420 L373.5 436 L375 446 L377 452 L379 456" transform="translate(0 -1)"/><path d="M368.5 282.4 L369.7 286 L370.2 295 L370.5 320 L371 360 L372 396 L372.7 420 L373.5 436 L375 446 L377 452 L379 456" transform="translate(0 0)"/><path d="M368.5 282.4 L369.7 286 L370.2 295 L370.5 320 L371 360 L372 396 L372.7 420 L373.5 436 L375 446 L377 452 L379 456" transform="translate(0 1)"/></g>
<g stroke="#33c433" stroke-width="2.6" fill="none" stroke-linejoin="round" stroke-linecap="round" ><path d="M533.2 310 L534.6 301.6 L536.4 291.3 L538.3 287.6 L540.7 283.8 L542.8 280 L544.3 283 L545.8 287 L547.5 286.5 L552 284.8 L556 283.3 L561 281.5 L567.4 279.8 L572 279.6 L575 280.2 L577.5 284 L580.5 291.3 L582 299 L583.3 308 L584.6 318 L585.9 327 L587.5 321 L589.9 312.9 L591.8 305 L593.6 297.9 L595.5 290 L597 287.8 L599.2 287 L602 287.3 L605 287.4 L610 285.4 L616 283 L623 282.5 L630 281.5 L638 280.5 L644 281 L649 283 L653 281 L656.6 279.5 L665 280.5 L676 282 L686 282 L689.5 282.5" transform="translate(0 -5.4)"/><path d="M533.2 310 L534.6 301.6 L536.4 291.3 L538.3 287.6 L540.7 283.8 L542.8 280 L544.3 283 L545.8 287 L547.5 286.5 L552 284.8 L556 283.3 L561 281.5 L567.4 279.8 L572 279.6 L575 280.2 L577.5 284 L580.5 291.3 L582 299 L583.3 308 L584.6 318 L585.9 327 L587.5 321 L589.9 312.9 L591.8 305 L593.6 297.9 L595.5 290 L597 287.8 L599.2 287 L602 287.3 L605 287.4 L610 285.4 L616 283 L623 282.5 L630 281.5 L638 280.5 L644 281 L649 283 L653 281 L656.6 279.5 L665 280.5 L676 282 L686 282 L689.5 282.5" transform="translate(0 -4.41818)"/><path d="M533.2 310 L534.6 301.6 L536.4 291.3 L538.3 287.6 L540.7 283.8 L542.8 280 L544.3 283 L545.8 287 L547.5 286.5 L552 284.8 L556 283.3 L561 281.5 L567.4 279.8 L572 279.6 L575 280.2 L577.5 284 L580.5 291.3 L582 299 L583.3 308 L584.6 318 L585.9 327 L587.5 321 L589.9 312.9 L591.8 305 L593.6 297.9 L595.5 290 L597 287.8 L599.2 287 L602 287.3 L605 287.4 L610 285.4 L616 283 L623 282.5 L630 281.5 L638 280.5 L644 281 L649 283 L653 281 L656.6 279.5 L665 280.5 L676 282 L686 282 L689.5 282.5" transform="translate(0 -3.43636)"/><path d="M533.2 310 L534.6 301.6 L536.4 291.3 L538.3 287.6 L540.7 283.8 L542.8 280 L544.3 283 L545.8 287 L547.5 286.5 L552 284.8 L556 283.3 L561 281.5 L567.4 279.8 L572 279.6 L575 280.2 L577.5 284 L580.5 291.3 L582 299 L583.3 308 L584.6 318 L585.9 327 L587.5 321 L589.9 312.9 L591.8 305 L593.6 297.9 L595.5 290 L597 287.8 L599.2 287 L602 287.3 L605 287.4 L610 285.4 L616 283 L623 282.5 L630 281.5 L638 280.5 L644 281 L649 283 L653 281 L656.6 279.5 L665 280.5 L676 282 L686 282 L689.5 282.5" transform="translate(0 -2.45455)"/><path d="M533.2 310 L534.6 301.6 L536.4 291.3 L538.3 287.6 L540.7 283.8 L542.8 280 L544.3 283 L545.8 287 L547.5 286.5 L552 284.8 L556 283.3 L561 281.5 L567.4 279.8 L572 279.6 L575 280.2 L577.5 284 L580.5 291.3 L582 299 L583.3 308 L584.6 318 L585.9 327 L587.5 321 L589.9 312.9 L591.8 305 L593.6 297.9 L595.5 290 L597 287.8 L599.2 287 L602 287.3 L605 287.4 L610 285.4 L616 283 L623 282.5 L630 281.5 L638 280.5 L644 281 L649 283 L653 281 L656.6 279.5 L665 280.5 L676 282 L686 282 L689.5 282.5" transform="translate(0 -1.47273)"/><path d="M533.2 310 L534.6 301.6 L536.4 291.3 L538.3 287.6 L540.7 283.8 L542.8 280 L544.3 283 L545.8 287 L547.5 286.5 L552 284.8 L556 283.3 L561 281.5 L567.4 279.8 L572 279.6 L575 280.2 L577.5 284 L580.5 291.3 L582 299 L583.3 308 L584.6 318 L585.9 327 L587.5 321 L589.9 312.9 L591.8 305 L593.6 297.9 L595.5 290 L597 287.8 L599.2 287 L602 287.3 L605 287.4 L610 285.4 L616 283 L623 282.5 L630 281.5 L638 280.5 L644 281 L649 283 L653 281 L656.6 279.5 L665 280.5 L676 282 L686 282 L689.5 282.5" transform="translate(0 -0.490909)"/><path d="M533.2 310 L534.6 301.6 L536.4 291.3 L538.3 287.6 L540.7 283.8 L542.8 280 L544.3 283 L545.8 287 L547.5 286.5 L552 284.8 L556 283.3 L561 281.5 L567.4 279.8 L572 279.6 L575 280.2 L577.5 284 L580.5 291.3 L582 299 L583.3 308 L584.6 318 L585.9 327 L587.5 321 L589.9 312.9 L591.8 305 L593.6 297.9 L595.5 290 L597 287.8 L599.2 287 L602 287.3 L605 287.4 L610 285.4 L616 283 L623 282.5 L630 281.5 L638 280.5 L644 281 L649 283 L653 281 L656.6 279.5 L665 280.5 L676 282 L686 282 L689.5 282.5" transform="translate(0 0.490909)"/><path d="M533.2 310 L534.6 301.6 L536.4 291.3 L538.3 287.6 L540.7 283.8 L542.8 280 L544.3 283 L545.8 287 L547.5 286.5 L552 284.8 L556 283.3 L561 281.5 L567.4 279.8 L572 279.6 L575 280.2 L577.5 284 L580.5 291.3 L582 299 L583.3 308 L584.6 318 L585.9 327 L587.5 321 L589.9 312.9 L591.8 305 L593.6 297.9 L595.5 290 L597 287.8 L599.2 287 L602 287.3 L605 287.4 L610 285.4 L616 283 L623 282.5 L630 281.5 L638 280.5 L644 281 L649 283 L653 281 L656.6 279.5 L665 280.5 L676 282 L686 282 L689.5 282.5" transform="translate(0 1.47273)"/><path d="M533.2 310 L534.6 301.6 L536.4 291.3 L538.3 287.6 L540.7 283.8 L542.8 280 L544.3 283 L545.8 287 L547.5 286.5 L552 284.8 L556 283.3 L561 281.5 L567.4 279.8 L572 279.6 L575 280.2 L577.5 284 L580.5 291.3 L582 299 L583.3 308 L584.6 318 L585.9 327 L587.5 321 L589.9 312.9 L591.8 305 L593.6 297.9 L595.5 290 L597 287.8 L599.2 287 L602 287.3 L605 287.4 L610 285.4 L616 283 L623 282.5 L630 281.5 L638 280.5 L644 281 L649 283 L653 281 L656.6 279.5 L665 280.5 L676 282 L686 282 L689.5 282.5" transform="translate(0 2.45455)"/><path d="M533.2 310 L534.6 301.6 L536.4 291.3 L538.3 287.6 L540.7 283.8 L542.8 280 L544.3 283 L545.8 287 L547.5 286.5 L552 284.8 L556 283.3 L561 281.5 L567.4 279.8 L572 279.6 L575 280.2 L577.5 284 L580.5 291.3 L582 299 L583.3 308 L584.6 318 L585.9 327 L587.5 321 L589.9 312.9 L591.8 305 L593.6 297.9 L595.5 290 L597 287.8 L599.2 287 L602 287.3 L605 287.4 L610 285.4 L616 283 L623 282.5 L630 281.5 L638 280.5 L644 281 L649 283 L653 281 L656.6 279.5 L665 280.5 L676 282 L686 282 L689.5 282.5" transform="translate(0 3.43636)"/><path d="M533.2 310 L534.6 301.6 L536.4 291.3 L538.3 287.6 L540.7 283.8 L542.8 280 L544.3 283 L545.8 287 L547.5 286.5 L552 284.8 L556 283.3 L561 281.5 L567.4 279.8 L572 279.6 L575 280.2 L577.5 284 L580.5 291.3 L582 299 L583.3 308 L584.6 318 L585.9 327 L587.5 321 L589.9 312.9 L591.8 305 L593.6 297.9 L595.5 290 L597 287.8 L599.2 287 L602 287.3 L605 287.4 L610 285.4 L616 283 L623 282.5 L630 281.5 L638 280.5 L644 281 L649 283 L653 281 L656.6 279.5 L665 280.5 L676 282 L686 282 L689.5 282.5" transform="translate(0 4.41818)"/><path d="M533.2 310 L534.6 301.6 L536.4 291.3 L538.3 287.6 L540.7 283.8 L542.8 280 L544.3 283 L545.8 287 L547.5 286.5 L552 284.8 L556 283.3 L561 281.5 L567.4 279.8 L572 279.6 L575 280.2 L577.5 284 L580.5 291.3 L582 299 L583.3 308 L584.6 318 L585.9 327 L587.5 321 L589.9 312.9 L591.8 305 L593.6 297.9 L595.5 290 L597 287.8 L599.2 287 L602 287.3 L605 287.4 L610 285.4 L616 283 L623 282.5 L630 281.5 L638 280.5 L644 281 L649 283 L653 281 L656.6 279.5 L665 280.5 L676 282 L686 282 L689.5 282.5" transform="translate(0 5.4)"/></g>
<g stroke="#33c433" stroke-width="6" fill="none" stroke-linejoin="round" stroke-linecap="round" ><path d="M689.5 282.5 L690.3 290 L690.6 330 L691 380 L691.8 415 L692.5 430 L694 440 L697 449 L700 455 L703 460" transform="translate(0 -1)"/><path d="M689.5 282.5 L690.3 290 L690.6 330 L691 380 L691.8 415 L692.5 430 L694 440 L697 449 L700 455 L703 460" transform="translate(0 0)"/><path d="M689.5 282.5 L690.3 290 L690.6 330 L691 380 L691.8 415 L692.5 430 L694 440 L697 449 L700 455 L703 460" transform="translate(0 1)"/></g>
<g stroke="#33c433" stroke-width="5" fill="none" stroke-linejoin="round" stroke-linecap="round" ><path d="M850 456 L850.3 420 L850.8 380 L851.6 350 L852.2 325 L852.5 309.3" transform="translate(0 -1)"/><path d="M850 456 L850.3 420 L850.8 380 L851.6 350 L852.2 325 L852.5 309.3" transform="translate(0 0)"/><path d="M850 456 L850.3 420 L850.8 380 L851.6 350 L852.2 325 L852.5 309.3" transform="translate(0 1)"/></g>
<g stroke="#33c433" stroke-width="2.6" fill="none" stroke-linejoin="round" stroke-linecap="round" ><path d="M852.5 309.3 L853.9 300.9 L855.7 290.6 L857.6 286.9 L860 283.1 L862.1 279.3 L863.6 282.3 L865.1 286.3 L866.8 285.8 L871.3 284.1 L875.3 282.6 L880.3 280.8 L886.7 279.1 L891.3 278.9 L894.3 279.5 L896.8 283.3 L899.8 290.6 L901.3 298.3 L902.6 307.3 L903.9 317.3 L905.2 326.3 L906.8 320.3 L909.2 312.2 L911.1 304.3 L912.9 297.2 L914.8 289.3 L916.3 287.1 L918 287 L924 286.3 L930 285.6 L936 283.8 L941 282.5 L950 282 L957 282 L962 283 L966 284.8 L970 283 L977 281.3 L986 281.5" transform="translate(0 -5.4)"/><path d="M852.5 309.3 L853.9 300.9 L855.7 290.6 L857.6 286.9 L860 283.1 L862.1 279.3 L863.6 282.3 L865.1 286.3 L866.8 285.8 L871.3 284.1 L875.3 282.6 L880.3 280.8 L886.7 279.1 L891.3 278.9 L894.3 279.5 L896.8 283.3 L899.8 290.6 L901.3 298.3 L902.6 307.3 L903.9 317.3 L905.2 326.3 L906.8 320.3 L909.2 312.2 L911.1 304.3 L912.9 297.2 L914.8 289.3 L916.3 287.1 L918 287 L924 286.3 L930 285.6 L936 283.8 L941 282.5 L950 282 L957 282 L962 283 L966 284.8 L970 283 L977 281.3 L986 281.5" transform="translate(0 -4.41818)"/><path d="M852.5 309.3 L853.9 300.9 L855.7 290.6 L857.6 286.9 L860 283.1 L862.1 279.3 L863.6 282.3 L865.1 286.3 L866.8 285.8 L871.3 284.1 L875.3 282.6 L880.3 280.8 L886.7 279.1 L891.3 278.9 L894.3 279.5 L896.8 283.3 L899.8 290.6 L901.3 298.3 L902.6 307.3 L903.9 317.3 L905.2 326.3 L906.8 320.3 L909.2 312.2 L911.1 304.3 L912.9 297.2 L914.8 289.3 L916.3 287.1 L918 287 L924 286.3 L930 285.6 L936 283.8 L941 282.5 L950 282 L957 282 L962 283 L966 284.8 L970 283 L977 281.3 L986 281.5" transform="translate(0 -3.43636)"/><path d="M852.5 309.3 L853.9 300.9 L855.7 290.6 L857.6 286.9 L860 283.1 L862.1 279.3 L863.6 282.3 L865.1 286.3 L866.8 285.8 L871.3 284.1 L875.3 282.6 L880.3 280.8 L886.7 279.1 L891.3 278.9 L894.3 279.5 L896.8 283.3 L899.8 290.6 L901.3 298.3 L902.6 307.3 L903.9 317.3 L905.2 326.3 L906.8 320.3 L909.2 312.2 L911.1 304.3 L912.9 297.2 L914.8 289.3 L916.3 287.1 L918 287 L924 286.3 L930 285.6 L936 283.8 L941 282.5 L950 282 L957 282 L962 283 L966 284.8 L970 283 L977 281.3 L986 281.5" transform="translate(0 -2.45455)"/><path d="M852.5 309.3 L853.9 300.9 L855.7 290.6 L857.6 286.9 L860 283.1 L862.1 279.3 L863.6 282.3 L865.1 286.3 L866.8 285.8 L871.3 284.1 L875.3 282.6 L880.3 280.8 L886.7 279.1 L891.3 278.9 L894.3 279.5 L896.8 283.3 L899.8 290.6 L901.3 298.3 L902.6 307.3 L903.9 317.3 L905.2 326.3 L906.8 320.3 L909.2 312.2 L911.1 304.3 L912.9 297.2 L914.8 289.3 L916.3 287.1 L918 287 L924 286.3 L930 285.6 L936 283.8 L941 282.5 L950 282 L957 282 L962 283 L966 284.8 L970 283 L977 281.3 L986 281.5" transform="translate(0 -1.47273)"/><path d="M852.5 309.3 L853.9 300.9 L855.7 290.6 L857.6 286.9 L860 283.1 L862.1 279.3 L863.6 282.3 L865.1 286.3 L866.8 285.8 L871.3 284.1 L875.3 282.6 L880.3 280.8 L886.7 279.1 L891.3 278.9 L894.3 279.5 L896.8 283.3 L899.8 290.6 L901.3 298.3 L902.6 307.3 L903.9 317.3 L905.2 326.3 L906.8 320.3 L909.2 312.2 L911.1 304.3 L912.9 297.2 L914.8 289.3 L916.3 287.1 L918 287 L924 286.3 L930 285.6 L936 283.8 L941 282.5 L950 282 L957 282 L962 283 L966 284.8 L970 283 L977 281.3 L986 281.5" transform="translate(0 -0.490909)"/><path d="M852.5 309.3 L853.9 300.9 L855.7 290.6 L857.6 286.9 L860 283.1 L862.1 279.3 L863.6 282.3 L865.1 286.3 L866.8 285.8 L871.3 284.1 L875.3 282.6 L880.3 280.8 L886.7 279.1 L891.3 278.9 L894.3 279.5 L896.8 283.3 L899.8 290.6 L901.3 298.3 L902.6 307.3 L903.9 317.3 L905.2 326.3 L906.8 320.3 L909.2 312.2 L911.1 304.3 L912.9 297.2 L914.8 289.3 L916.3 287.1 L918 287 L924 286.3 L930 285.6 L936 283.8 L941 282.5 L950 282 L957 282 L962 283 L966 284.8 L970 283 L977 281.3 L986 281.5" transform="translate(0 0.490909)"/><path d="M852.5 309.3 L853.9 300.9 L855.7 290.6 L857.6 286.9 L860 283.1 L862.1 279.3 L863.6 282.3 L865.1 286.3 L866.8 285.8 L871.3 284.1 L875.3 282.6 L880.3 280.8 L886.7 279.1 L891.3 278.9 L894.3 279.5 L896.8 283.3 L899.8 290.6 L901.3 298.3 L902.6 307.3 L903.9 317.3 L905.2 326.3 L906.8 320.3 L909.2 312.2 L911.1 304.3 L912.9 297.2 L914.8 289.3 L916.3 287.1 L918 287 L924 286.3 L930 285.6 L936 283.8 L941 282.5 L950 282 L957 282 L962 283 L966 284.8 L970 283 L977 281.3 L986 281.5" transform="translate(0 1.47273)"/><path d="M852.5 309.3 L853.9 300.9 L855.7 290.6 L857.6 286.9 L860 283.1 L862.1 279.3 L863.6 282.3 L865.1 286.3 L866.8 285.8 L871.3 284.1 L875.3 282.6 L880.3 280.8 L886.7 279.1 L891.3 278.9 L894.3 279.5 L896.8 283.3 L899.8 290.6 L901.3 298.3 L902.6 307.3 L903.9 317.3 L905.2 326.3 L906.8 320.3 L909.2 312.2 L911.1 304.3 L912.9 297.2 L914.8 289.3 L916.3 287.1 L918 287 L924 286.3 L930 285.6 L936 283.8 L941 282.5 L950 282 L957 282 L962 283 L966 284.8 L970 283 L977 281.3 L986 281.5" transform="translate(0 2.45455)"/><path d="M852.5 309.3 L853.9 300.9 L855.7 290.6 L857.6 286.9 L860 283.1 L862.1 279.3 L863.6 282.3 L865.1 286.3 L866.8 285.8 L871.3 284.1 L875.3 282.6 L880.3 280.8 L886.7 279.1 L891.3 278.9 L894.3 279.5 L896.8 283.3 L899.8 290.6 L901.3 298.3 L902.6 307.3 L903.9 317.3 L905.2 326.3 L906.8 320.3 L909.2 312.2 L911.1 304.3 L912.9 297.2 L914.8 289.3 L916.3 287.1 L918 287 L924 286.3 L930 285.6 L936 283.8 L941 282.5 L950 282 L957 282 L962 283 L966 284.8 L970 283 L977 281.3 L986 281.5" transform="translate(0 3.43636)"/><path d="M852.5 309.3 L853.9 300.9 L855.7 290.6 L857.6 286.9 L860 283.1 L862.1 279.3 L863.6 282.3 L865.1 286.3 L866.8 285.8 L871.3 284.1 L875.3 282.6 L880.3 280.8 L886.7 279.1 L891.3 278.9 L894.3 279.5 L896.8 283.3 L899.8 290.6 L901.3 298.3 L902.6 307.3 L903.9 317.3 L905.2 326.3 L906.8 320.3 L909.2 312.2 L911.1 304.3 L912.9 297.2 L914.8 289.3 L916.3 287.1 L918 287 L924 286.3 L930 285.6 L936 283.8 L941 282.5 L950 282 L957 282 L962 283 L966 284.8 L970 283 L977 281.3 L986 281.5" transform="translate(0 4.41818)"/><path d="M852.5 309.3 L853.9 300.9 L855.7 290.6 L857.6 286.9 L860 283.1 L862.1 279.3 L863.6 282.3 L865.1 286.3 L866.8 285.8 L871.3 284.1 L875.3 282.6 L880.3 280.8 L886.7 279.1 L891.3 278.9 L894.3 279.5 L896.8 283.3 L899.8 290.6 L901.3 298.3 L902.6 307.3 L903.9 317.3 L905.2 326.3 L906.8 320.3 L909.2 312.2 L911.1 304.3 L912.9 297.2 L914.8 289.3 L916.3 287.1 L918 287 L924 286.3 L930 285.6 L936 283.8 L941 282.5 L950 282 L957 282 L962 283 L966 284.8 L970 283 L977 281.3 L986 281.5" transform="translate(0 5.4)"/></g>
</g>
<path d="M84 457.5H530M84 464.5H530" stroke="#1414ff" stroke-width="1" stroke-dasharray="3 9 5 14 2 11 6 7" shape-rendering="crispEdges"/>
<rect x="84" y="457" width="446" height="8" fill="#ff50ff" shape-rendering="crispEdges"/>
<rect x="84" y="458" width="446" height="6" fill="#d01818" shape-rendering="crispEdges"/>
<rect x="84" y="459" width="446" height="4" fill="#ff8c00" shape-rendering="crispEdges"/>
<path d="M530 457.500H701M530 463.500H701" stroke="#1414ff" stroke-width="1" stroke-dasharray="7 3 12 5 4 6 9 2" shape-rendering="crispEdges"/>
<rect x="530" y="458" width="171" height="5" fill="#ff50ff"/>
<path d="M530 460.500H701" stroke="#d01818" stroke-width="1.200" stroke-dasharray="9 2 5 1 14 3"/>
<path d="M850 457.500H984M850 463.500H984" stroke="#1414ff" stroke-width="1" stroke-dasharray="7 3 12 5 4 6 9 2" shape-rendering="crispEdges"/>
<rect x="850" y="458" width="134" height="5" fill="#ff50ff"/>
<path d="M850 460.500H984" stroke="#d01818" stroke-width="1.200" stroke-dasharray="9 2 5 1 14 3"/>
<rect x="700" y="457.5" width="150" height="5.5" fill="#1414ff"/><rect x="700" y="458.2" width="150" height="4.2" fill="#ff50ff"/>
<g stroke="#1414ff" stroke-width="2" fill="none" stroke-linejoin="round" stroke-linecap="round" ><path d="M692.3 426 L693.5 434 L695.5 444 L698 451.5 L700.5 456.5 L703 460.5 L705 458.5 L706.5 455.5 L709 455.5 L712 456.5 L720 459.3 L728 461.3 L733 461 L736.5 458.5 L738.5 453 L740.5 444 L742.3 432 L744 421.5 L745.3 417 L746.5 414.8 L747.8 417 L749.8 423 L752.5 432 L755 443 L757 450.5 L759 453.5 L763 453.5 L770 454.5 L775 456.5 L780 458.3 L790 459.3 L800 459.3 L808 458 L812 459.5 L830 459.5 L851 459.5" transform="translate(0 -3)"/><path d="M692.3 426 L693.5 434 L695.5 444 L698 451.5 L700.5 456.5 L703 460.5 L705 458.5 L706.5 455.5 L709 455.5 L712 456.5 L720 459.3 L728 461.3 L733 461 L736.5 458.5 L738.5 453 L740.5 444 L742.3 432 L744 421.5 L745.3 417 L746.5 414.8 L747.8 417 L749.8 423 L752.5 432 L755 443 L757 450.5 L759 453.5 L763 453.5 L770 454.5 L775 456.5 L780 458.3 L790 459.3 L800 459.3 L808 458 L812 459.5 L830 459.5 L851 459.5" transform="translate(0 -2)"/><path d="M692.3 426 L693.5 434 L695.5 444 L698 451.5 L700.5 456.5 L703 460.5 L705 458.5 L706.5 455.5 L709 455.5 L712 456.5 L720 459.3 L728 461.3 L733 461 L736.5 458.5 L738.5 453 L740.5 444 L742.3 432 L744 421.5 L745.3 417 L746.5 414.8 L747.8 417 L749.8 423 L752.5 432 L755 443 L757 450.5 L759 453.5 L763 453.5 L770 454.5 L775 456.5 L780 458.3 L790 459.3 L800 459.3 L808 458 L812 459.5 L830 459.5 L851 459.5" transform="translate(0 -1)"/><path d="M692.3 426 L693.5 434 L695.5 444 L698 451.5 L700.5 456.5 L703 460.5 L705 458.5 L706.5 455.5 L709 455.5 L712 456.5 L720 459.3 L728 461.3 L733 461 L736.5 458.5 L738.5 453 L740.5 444 L742.3 432 L744 421.5 L745.3 417 L746.5 414.8 L747.8 417 L749.8 423 L752.5 432 L755 443 L757 450.5 L759 453.5 L763 453.5 L770 454.5 L775 456.5 L780 458.3 L790 459.3 L800 459.3 L808 458 L812 459.5 L830 459.5 L851 459.5" transform="translate(0 0)"/><path d="M692.3 426 L693.5 434 L695.5 444 L698 451.5 L700.5 456.5 L703 460.5 L705 458.5 L706.5 455.5 L709 455.5 L712 456.5 L720 459.3 L728 461.3 L733 461 L736.5 458.5 L738.5 453 L740.5 444 L742.3 432 L744 421.5 L745.3 417 L746.5 414.8 L747.8 417 L749.8 423 L752.5 432 L755 443 L757 450.5 L759 453.5 L763 453.5 L770 454.5 L775 456.5 L780 458.3 L790 459.3 L800 459.3 L808 458 L812 459.5 L830 459.5 L851 459.5" transform="translate(0 1)"/><path d="M692.3 426 L693.5 434 L695.5 444 L698 451.5 L700.5 456.5 L703 460.5 L705 458.5 L706.5 455.5 L709 455.5 L712 456.5 L720 459.3 L728 461.3 L733 461 L736.5 458.5 L738.5 453 L740.5 444 L742.3 432 L744 421.5 L745.3 417 L746.5 414.8 L747.8 417 L749.8 423 L752.5 432 L755 443 L757 450.5 L759 453.5 L763 453.5 L770 454.5 L775 456.5 L780 458.3 L790 459.3 L800 459.3 L808 458 L812 459.5 L830 459.5 L851 459.5" transform="translate(0 2)"/><path d="M692.3 426 L693.5 434 L695.5 444 L698 451.5 L700.5 456.5 L703 460.5 L705 458.5 L706.5 455.5 L709 455.5 L712 456.5 L720 459.3 L728 461.3 L733 461 L736.5 458.5 L738.5 453 L740.5 444 L742.3 432 L744 421.5 L745.3 417 L746.5 414.8 L747.8 417 L749.8 423 L752.5 432 L755 443 L757 450.5 L759 453.5 L763 453.5 L770 454.5 L775 456.5 L780 458.3 L790 459.3 L800 459.3 L808 458 L812 459.5 L830 459.5 L851 459.5" transform="translate(0 3)"/></g>
<g stroke="#ff50ff" stroke-width="1.6" fill="none" stroke-linejoin="round" stroke-linecap="round" ><path d="M692.3 426 L693.5 434 L695.5 444 L698 451.5 L700.5 456.5 L703 460.5 L705 458.5 L706.5 455.5 L709 455.5 L712 456.5 L720 459.3 L728 461.3 L733 461 L736.5 458.5 L738.5 453 L740.5 444 L742.3 432 L744 421.5 L745.3 417 L746.5 414.8 L747.8 417 L749.8 423 L752.5 432 L755 443 L757 450.5 L759 453.5 L763 453.5 L770 454.5 L775 456.5 L780 458.3 L790 459.3 L800 459.3 L808 458 L812 459.5 L830 459.5 L851 459.5" transform="translate(0 -2.2)"/><path d="M692.3 426 L693.5 434 L695.5 444 L698 451.5 L700.5 456.5 L703 460.5 L705 458.5 L706.5 455.5 L709 455.5 L712 456.5 L720 459.3 L728 461.3 L733 461 L736.5 458.5 L738.5 453 L740.5 444 L742.3 432 L744 421.5 L745.3 417 L746.5 414.8 L747.8 417 L749.8 423 L752.5 432 L755 443 L757 450.5 L759 453.5 L763 453.5 L770 454.5 L775 456.5 L780 458.3 L790 459.3 L800 459.3 L808 458 L812 459.5 L830 459.5 L851 459.5" transform="translate(0 -1.1)"/><path d="M692.3 426 L693.5 434 L695.5 444 L698 451.5 L700.5 456.5 L703 460.5 L705 458.5 L706.5 455.5 L709 455.5 L712 456.5 L720 459.3 L728 461.3 L733 461 L736.5 458.5 L738.5 453 L740.5 444 L742.3 432 L744 421.5 L745.3 417 L746.5 414.8 L747.8 417 L749.8 423 L752.5 432 L755 443 L757 450.5 L759 453.5 L763 453.5 L770 454.5 L775 456.5 L780 458.3 L790 459.3 L800 459.3 L808 458 L812 459.5 L830 459.5 L851 459.5" transform="translate(0 0)"/><path d="M692.3 426 L693.5 434 L695.5 444 L698 451.5 L700.5 456.5 L703 460.5 L705 458.5 L706.5 455.5 L709 455.5 L712 456.5 L720 459.3 L728 461.3 L733 461 L736.5 458.5 L738.5 453 L740.5 444 L742.3 432 L744 421.5 L745.3 417 L746.5 414.8 L747.8 417 L749.8 423 L752.5 432 L755 443 L757 450.5 L759 453.5 L763 453.5 L770 454.5 L775 456.5 L780 458.3 L790 459.3 L800 459.3 L808 458 L812 459.5 L830 459.5 L851 459.5" transform="translate(0 1.1)"/><path d="M692.3 426 L693.5 434 L695.5 444 L698 451.5 L700.5 456.5 L703 460.5 L705 458.5 L706.5 455.5 L709 455.5 L712 456.5 L720 459.3 L728 461.3 L733 461 L736.5 458.5 L738.5 453 L740.5 444 L742.3 432 L744 421.5 L745.3 417 L746.5 414.8 L747.8 417 L749.8 423 L752.5 432 L755 443 L757 450.5 L759 453.5 L763 453.5 L770 454.5 L775 456.5 L780 458.3 L790 459.3 L800 459.3 L808 458 L812 459.5 L830 459.5 L851 459.5" transform="translate(0 2.2)"/></g>
<g stroke="#d01818" stroke-width="1.3" fill="none" stroke-linejoin="round" stroke-linecap="round" ><path d="M695.5 444 L698 451.5 L700.5 456.5 L703 460.5 L705 458.5 L706.5 455.5 L709 455.5 L712 456.5 L720 459.3 L728 461.3 L733 461 L736.5 458.5 L738.5 453" transform="translate(0 -1.4)"/><path d="M695.5 444 L698 451.5 L700.5 456.5 L703 460.5 L705 458.5 L706.5 455.5 L709 455.5 L712 456.5 L720 459.3 L728 461.3 L733 461 L736.5 458.5 L738.5 453" transform="translate(0 -0.466667)"/><path d="M695.5 444 L698 451.5 L700.5 456.5 L703 460.5 L705 458.5 L706.5 455.5 L709 455.5 L712 456.5 L720 459.3 L728 461.3 L733 461 L736.5 458.5 L738.5 453" transform="translate(0 0.466667)"/><path d="M695.5 444 L698 451.5 L700.5 456.5 L703 460.5 L705 458.5 L706.5 455.5 L709 455.5 L712 456.5 L720 459.3 L728 461.3 L733 461 L736.5 458.5 L738.5 453" transform="translate(0 1.4)"/></g>
<g stroke="#d01818" stroke-width="1.3" fill="none" stroke-linejoin="round" stroke-linecap="round" ><path d="M759 453.5 L763 453.5 L770 454.5 L775 456.5 L780 458.3 L790 459.3 L800 459.3 L808 458 L812 459.5 L830 459.5 L851 459.5" transform="translate(0 -1.4)"/><path d="M759 453.5 L763 453.5 L770 454.5 L775 456.5 L780 458.3 L790 459.3 L800 459.3 L808 458 L812 459.5 L830 459.5 L851 459.5" transform="translate(0 -0.466667)"/><path d="M759 453.5 L763 453.5 L770 454.5 L775 456.5 L780 458.3 L790 459.3 L800 459.3 L808 458 L812 459.5 L830 459.5 L851 459.5" transform="translate(0 0.466667)"/><path d="M759 453.5 L763 453.5 L770 454.5 L775 456.5 L780 458.3 L790 459.3 L800 459.3 L808 458 L812 459.5 L830 459.5 L851 459.5" transform="translate(0 1.4)"/></g>
<g stroke="#d01818" stroke-width="0.9" fill="none" stroke-linejoin="round" stroke-linecap="round" ><path d="M738.5 453 L740.5 444 L742.3 432 L744 421.5 L745.3 417 L746.5 414.8 L747.8 417 L749.8 423 L752.5 432 L755 443 L757 450.5 L759 453.5" transform="translate(0 -0.6)"/><path d="M738.5 453 L740.5 444 L742.3 432 L744 421.5 L745.3 417 L746.5 414.8 L747.8 417 L749.8 423 L752.5 432 L755 443 L757 450.5 L759 453.5" transform="translate(0 0.6)"/></g>
<g stroke="#ff8c00" stroke-width="1.1" fill="none" stroke-linejoin="round" stroke-linecap="round" ><path d="M700.5 456.5 L703 460.5 L705 458.5 L706.5 455.5 L709 455.5 L712 456.5 L720 459.3 L728 461.3 L733 461 L736.5 458.5" transform="translate(0 -0.8)"/><path d="M700.5 456.5 L703 460.5 L705 458.5 L706.5 455.5 L709 455.5 L712 456.5 L720 459.3 L728 461.3 L733 461 L736.5 458.5" transform="translate(0 0)"/><path d="M700.5 456.5 L703 460.5 L705 458.5 L706.5 455.5 L709 455.5 L712 456.5 L720 459.3 L728 461.3 L733 461 L736.5 458.5" transform="translate(0 0.8)"/></g>
<g stroke="#ff8c00" stroke-width="1.1" fill="none" stroke-linejoin="round" stroke-linecap="round" ><path d="M759 453.5 L763 453.5 L770 454.5 L775 456.5 L780 458.3 L790 459.3 L800 459.3 L808 458 L812 459.5 L830 459.5 L851 459.5" transform="translate(0 -0.8)"/><path d="M759 453.5 L763 453.5 L770 454.5 L775 456.5 L780 458.3 L790 459.3 L800 459.3 L808 458 L812 459.5 L830 459.5 L851 459.5" transform="translate(0 0)"/><path d="M759 453.5 L763 453.5 L770 454.5 L775 456.5 L780 458.3 L790 459.3 L800 459.3 L808 458 L812 459.5 L830 459.5 L851 459.5" transform="translate(0 0.8)"/></g>
<g stroke="#ff8c00" stroke-width="0.8" fill="none" stroke-linejoin="round" stroke-linecap="round" ><path d="M736.5 458.5 L738.5 453 L740.5 444 L742.3 432" transform="translate(0 -0.5)"/><path d="M736.5 458.5 L738.5 453 L740.5 444 L742.3 432" transform="translate(0 0.5)"/></g>
<path d="M744 455.5h9.5" stroke="#33c433" stroke-width="3.5"/>
<path d="M106.7 411.5 L108.2 416 L110.5 426 L113 438 L115.3 449 L117 455" stroke="#1414ff" stroke-width="1.8" fill="none" stroke-linejoin="round" transform="translate(-0.3 0)"/><path d="M100.8 449 L102.6 438 L104 426 L105.4 416 L106.7 411.5" stroke="#1414ff" stroke-width="1" fill="none" transform="translate(1.2 0)"/><path d="M105.4 416 L106.7 411.5 L108.2 416 L110.5 426" stroke="#ff50ff" stroke-width="1" fill="none"/>
<path d="M116.5 456.5 C118.5 450.6 122.5 450.1 130.25 450.6 S140 456.5 144 456.5Z" fill="#33c433"/><path d="M116.5 456.5 C118.5 452.1 122.5 451.6 130.25 452.1 S140 456.5 144 456.5Z" fill="#1414ff"/><path d="M116.5 456.5 C118.5 453.3 122.5 452.8 130.25 453.3 S140 456.5 144 456.5Z" fill="#ff50ff"/>
<path d="M427.5 411 L429.5 416 L431.5 425 L433.5 436 L435.5 448 L437 455" stroke="#1414ff" stroke-width="1.3" stroke-dasharray="4 2 1 2" fill="none"/><ellipse cx="419" cy="453.5" rx="2.2" ry="2.6" fill="#1414ff"/><circle cx="419" cy="454" r="1.1" fill="#ff50ff"/><ellipse cx="426.6" cy="416" rx="1.3" ry="2.4" fill="#1414ff"/>
<path d="M437 456.5 C439 450.6 443 450.1 451.5 450.6 S462 456.5 466 456.5Z" fill="#33c433"/><path d="M437 456.5 C439 452.1 443 451.6 451.5 452.1 S462 456.5 466 456.5Z" fill="#1414ff"/><path d="M437 456.5 C439 453.3 443 452.8 451.5 453.3 S462 456.5 466 456.5Z" fill="#ff50ff"/>
<g stroke="#1414ff" stroke-width="2.6" fill="none" stroke-linejoin="round" stroke-linecap="round" ><path d="M227 285.5 L233 283.5 L239.5 281.2 L245 279.8 L249 279.2 L253.5 280.5 L256 283.5" transform="translate(0 -1.3)"/><path d="M227 285.5 L233 283.5 L239.5 281.2 L245 279.8 L249 279.2 L253.5 280.5 L256 283.5" transform="translate(0 -0.433333)"/><path d="M227 285.5 L233 283.5 L239.5 281.2 L245 279.8 L249 279.2 L253.5 280.5 L256 283.5" transform="translate(0 0.433333)"/><path d="M227 285.5 L233 283.5 L239.5 281.2 L245 279.8 L249 279.2 L253.5 280.5 L256 283.5" transform="translate(0 1.3)"/></g>
<g stroke="#ff50ff" stroke-width="1.9" fill="none" stroke-linejoin="round" stroke-linecap="round" ><path d="M227 285.5 L233 283.5 L239.5 281.2 L245 279.8 L249 279.2 L253.5 280.5 L256 283.5" transform="translate(0 -0.6)"/><path d="M227 285.5 L233 283.5 L239.5 281.2 L245 279.8 L249 279.2 L253.5 280.5 L256 283.5" transform="translate(0 0.6)"/></g>
<g stroke="#1414ff" stroke-width="2.6" fill="none" stroke-linejoin="round" stroke-linecap="round" ><path d="M278.3 288.7 L283 287.3 L287.8 286 L293 284.3 L298.4 282.9 L306 282.5 L314.2 282.4 L321.6 281.3 L325 282.8 L328.4 284.5 L332 282.5 L337.4 280.2 L341 281.3 L345.8 282.4 L359.6 282.4 L368.5 282.4" transform="translate(0 -1.3)"/><path d="M278.3 288.7 L283 287.3 L287.8 286 L293 284.3 L298.4 282.9 L306 282.5 L314.2 282.4 L321.6 281.3 L325 282.8 L328.4 284.5 L332 282.5 L337.4 280.2 L341 281.3 L345.8 282.4 L359.6 282.4 L368.5 282.4" transform="translate(0 -0.433333)"/><path d="M278.3 288.7 L283 287.3 L287.8 286 L293 284.3 L298.4 282.9 L306 282.5 L314.2 282.4 L321.6 281.3 L325 282.8 L328.4 284.5 L332 282.5 L337.4 280.2 L341 281.3 L345.8 282.4 L359.6 282.4 L368.5 282.4" transform="translate(0 0.433333)"/><path d="M278.3 288.7 L283 287.3 L287.8 286 L293 284.3 L298.4 282.9 L306 282.5 L314.2 282.4 L321.6 281.3 L325 282.8 L328.4 284.5 L332 282.5 L337.4 280.2 L341 281.3 L345.8 282.4 L359.6 282.4 L368.5 282.4" transform="translate(0 1.3)"/></g>
<g stroke="#ff50ff" stroke-width="1.9" fill="none" stroke-linejoin="round" stroke-linecap="round" ><path d="M278.3 288.7 L283 287.3 L287.8 286 L293 284.3 L298.4 282.9 L306 282.5 L314.2 282.4 L321.6 281.3 L325 282.8 L328.4 284.5 L332 282.5 L337.4 280.2 L341 281.3 L345.8 282.4 L359.6 282.4 L368.5 282.4" transform="translate(0 -0.6)"/><path d="M278.3 288.7 L283 287.3 L287.8 286 L293 284.3 L298.4 282.9 L306 282.5 L314.2 282.4 L321.6 281.3 L325 282.8 L328.4 284.5 L332 282.5 L337.4 280.2 L341 281.3 L345.8 282.4 L359.6 282.4 L368.5 282.4" transform="translate(0 0.6)"/></g>
<ellipse cx="220.3" cy="284.5" rx="1.6" ry="2.4" fill="#1414ff" transform="rotate(35 220.3 284.5)"/><circle cx="220.3" cy="284.5" r="0.8" fill="#ff50ff"/>
<ellipse cx="223" cy="281" rx="1.6" ry="2.4" fill="#1414ff" transform="rotate(35 223 281)"/><circle cx="223" cy="281" r="0.8" fill="#ff50ff"/>
<ellipse cx="266" cy="324.5" rx="1.6" ry="2.4" fill="#1414ff" transform="rotate(35 266 324.5)"/><circle cx="266" cy="324.5" r="0.8" fill="#ff50ff"/>
<path d="M529.5 454 L530 420 L530.5 380 L531.5 345 L532.5 322 L533.2 310" stroke="#1414ff" stroke-width="1.2" fill="none"/><path d="M529.5 454 L530 420 L530.5 380 L531.5 345 L532.5 322 L533.2 310" stroke="#33c433" stroke-width="1.2" stroke-dasharray="3 14 6 22 2 9" fill="none" transform="translate(0.6 0)"/>
<g stroke="#1414ff" stroke-width="1.6" fill="none" stroke-linejoin="round" stroke-linecap="round" ><path d="M533.2 310 L534.6 301.6 L536.4 291.3 L538.3 287.6 L540.7 283.8 L542.8 280 L544.3 283 L545.8 287 L547.5 286.5 L552 284.8 L556 283.3 L561 281.5 L567.4 279.8 L572 279.6 L575 280.2 L577.5 284 L580.5 291.3 L582 299 L583.3 308 L584.6 318 L585.9 327 L587.5 321 L589.9 312.9 L591.8 305 L593.6 297.9 L595.5 290 L597 287.8 L599.2 287 L602 287.3 L605 287.4 L610 285.4 L616 283 L623 282.5 L630 281.5 L638 280.5 L644 281 L649 283 L653 281 L656.6 279.5 L665 280.5 L676 282 L686 282 L689.5 282.5" transform="translate(0 -3)"/><path d="M533.2 310 L534.6 301.6 L536.4 291.3 L538.3 287.6 L540.7 283.8 L542.8 280 L544.3 283 L545.8 287 L547.5 286.5 L552 284.8 L556 283.3 L561 281.5 L567.4 279.8 L572 279.6 L575 280.2 L577.5 284 L580.5 291.3 L582 299 L583.3 308 L584.6 318 L585.9 327 L587.5 321 L589.9 312.9 L591.8 305 L593.6 297.9 L595.5 290 L597 287.8 L599.2 287 L602 287.3 L605 287.4 L610 285.4 L616 283 L623 282.5 L630 281.5 L638 280.5 L644 281 L649 283 L653 281 L656.6 279.5 L665 280.5 L676 282 L686 282 L689.5 282.5" transform="translate(0 -2)"/><path d="M533.2 310 L534.6 301.6 L536.4 291.3 L538.3 287.6 L540.7 283.8 L542.8 280 L544.3 283 L545.8 287 L547.5 286.5 L552 284.8 L556 283.3 L561 281.5 L567.4 279.8 L572 279.6 L575 280.2 L577.5 284 L580.5 291.3 L582 299 L583.3 308 L584.6 318 L585.9 327 L587.5 321 L589.9 312.9 L591.8 305 L593.6 297.9 L595.5 290 L597 287.8 L599.2 287 L602 287.3 L605 287.4 L610 285.4 L616 283 L623 282.5 L630 281.5 L638 280.5 L644 281 L649 283 L653 281 L656.6 279.5 L665 280.5 L676 282 L686 282 L689.5 282.5" transform="translate(0 -1)"/><path d="M533.2 310 L534.6 301.6 L536.4 291.3 L538.3 287.6 L540.7 283.8 L542.8 280 L544.3 283 L545.8 287 L547.5 286.5 L552 284.8 L556 283.3 L561 281.5 L567.4 279.8 L572 279.6 L575 280.2 L577.5 284 L580.5 291.3 L582 299 L583.3 308 L584.6 318 L585.9 327 L587.5 321 L589.9 312.9 L591.8 305 L593.6 297.9 L595.5 290 L597 287.8 L599.2 287 L602 287.3 L605 287.4 L610 285.4 L616 283 L623 282.5 L630 281.5 L638 280.5 L644 281 L649 283 L653 281 L656.6 279.5 L665 280.5 L676 282 L686 282 L689.5 282.5" transform="translate(0 0)"/><path d="M533.2 310 L534.6 301.6 L536.4 291.3 L538.3 287.6 L540.7 283.8 L542.8 280 L544.3 283 L545.8 287 L547.5 286.5 L552 284.8 L556 283.3 L561 281.5 L567.4 279.8 L572 279.6 L575 280.2 L577.5 284 L580.5 291.3 L582 299 L583.3 308 L584.6 318 L585.9 327 L587.5 321 L589.9 312.9 L591.8 305 L593.6 297.9 L595.5 290 L597 287.8 L599.2 287 L602 287.3 L605 287.4 L610 285.4 L616 283 L623 282.5 L630 281.5 L638 280.5 L644 281 L649 283 L653 281 L656.6 279.5 L665 280.5 L676 282 L686 282 L689.5 282.5" transform="translate(0 1)"/><path d="M533.2 310 L534.6 301.6 L536.4 291.3 L538.3 287.6 L540.7 283.8 L542.8 280 L544.3 283 L545.8 287 L547.5 286.5 L552 284.8 L556 283.3 L561 281.5 L567.4 279.8 L572 279.6 L575 280.2 L577.5 284 L580.5 291.3 L582 299 L583.3 308 L584.6 318 L585.9 327 L587.5 321 L589.9 312.9 L591.8 305 L593.6 297.9 L595.5 290 L597 287.8 L599.2 287 L602 287.3 L605 287.4 L610 285.4 L616 283 L623 282.5 L630 281.5 L638 280.5 L644 281 L649 283 L653 281 L656.6 279.5 L665 280.5 L676 282 L686 282 L689.5 282.5" transform="translate(0 2)"/><path d="M533.2 310 L534.6 301.6 L536.4 291.3 L538.3 287.6 L540.7 283.8 L542.8 280 L544.3 283 L545.8 287 L547.5 286.5 L552 284.8 L556 283.3 L561 281.5 L567.4 279.8 L572 279.6 L575 280.2 L577.5 284 L580.5 291.3 L582 299 L583.3 308 L584.6 318 L585.9 327 L587.5 321 L589.9 312.9 L591.8 305 L593.6 297.9 L595.5 290 L597 287.8 L599.2 287 L602 287.3 L605 287.4 L610 285.4 L616 283 L623 282.5 L630 281.5 L638 280.5 L644 281 L649 283 L653 281 L656.6 279.5 L665 280.5 L676 282 L686 282 L689.5 282.5" transform="translate(0 3)"/></g>
<g stroke="#1414ff" stroke-width="1.6" fill="none" stroke-linejoin="round" stroke-linecap="round" ><path d="M852.5 309.3 L853.9 300.9 L855.7 290.6 L857.6 286.9 L860 283.1 L862.1 279.3 L863.6 282.3 L865.1 286.3 L866.8 285.8 L871.3 284.1 L875.3 282.6 L880.3 280.8 L886.7 279.1 L891.3 278.9 L894.3 279.5 L896.8 283.3 L899.8 290.6 L901.3 298.3 L902.6 307.3 L903.9 317.3 L905.2 326.3 L906.8 320.3 L909.2 312.2 L911.1 304.3 L912.9 297.2 L914.8 289.3 L916.3 287.1 L918 287 L924 286.3 L930 285.6 L936 283.8 L941 282.5 L950 282 L957 282 L962 283 L966 284.8 L970 283 L977 281.3 L986 281.5" transform="translate(0 -3)"/><path d="M852.5 309.3 L853.9 300.9 L855.7 290.6 L857.6 286.9 L860 283.1 L862.1 279.3 L863.6 282.3 L865.1 286.3 L866.8 285.8 L871.3 284.1 L875.3 282.6 L880.3 280.8 L886.7 279.1 L891.3 278.9 L894.3 279.5 L896.8 283.3 L899.8 290.6 L901.3 298.3 L902.6 307.3 L903.9 317.3 L905.2 326.3 L906.8 320.3 L909.2 312.2 L911.1 304.3 L912.9 297.2 L914.8 289.3 L916.3 287.1 L918 287 L924 286.3 L930 285.6 L936 283.8 L941 282.5 L950 282 L957 282 L962 283 L966 284.8 L970 283 L977 281.3 L986 281.5" transform="translate(0 -2)"/><path d="M852.5 309.3 L853.9 300.9 L855.7 290.6 L857.6 286.9 L860 283.1 L862.1 279.3 L863.6 282.3 L865.1 286.3 L866.8 285.8 L871.3 284.1 L875.3 282.6 L880.3 280.8 L886.7 279.1 L891.3 278.9 L894.3 279.5 L896.8 283.3 L899.8 290.6 L901.3 298.3 L902.6 307.3 L903.9 317.3 L905.2 326.3 L906.8 320.3 L909.2 312.2 L911.1 304.3 L912.9 297.2 L914.8 289.3 L916.3 287.1 L918 287 L924 286.3 L930 285.6 L936 283.8 L941 282.5 L950 282 L957 282 L962 283 L966 284.8 L970 283 L977 281.3 L986 281.5" transform="translate(0 -1)"/><path d="M852.5 309.3 L853.9 300.9 L855.7 290.6 L857.6 286.9 L860 283.1 L862.1 279.3 L863.6 282.3 L865.1 286.3 L866.8 285.8 L871.3 284.1 L875.3 282.6 L880.3 280.8 L886.7 279.1 L891.3 278.9 L894.3 279.5 L896.8 283.3 L899.8 290.6 L901.3 298.3 L902.6 307.3 L903.9 317.3 L905.2 326.3 L906.8 320.3 L909.2 312.2 L911.1 304.3 L912.9 297.2 L914.8 289.3 L916.3 287.1 L918 287 L924 286.3 L930 285.6 L936 283.8 L941 282.5 L950 282 L957 282 L962 283 L966 284.8 L970 283 L977 281.3 L986 281.5" transform="translate(0 0)"/><path d="M852.5 309.3 L853.9 300.9 L855.7 290.6 L857.6 286.9 L860 283.1 L862.1 279.3 L863.6 282.3 L865.1 286.3 L866.8 285.8 L871.3 284.1 L875.3 282.6 L880.3 280.8 L886.7 279.1 L891.3 278.9 L894.3 279.5 L896.8 283.3 L899.8 290.6 L901.3 298.3 L902.6 307.3 L903.9 317.3 L905.2 326.3 L906.8 320.3 L909.2 312.2 L911.1 304.3 L912.9 297.2 L914.8 289.3 L916.3 287.1 L918 287 L924 286.3 L930 285.6 L936 283.8 L941 282.5 L950 282 L957 282 L962 283 L966 284.8 L970 283 L977 281.3 L986 281.5" transform="translate(0 1)"/><path d="M852.5 309.3 L853.9 300.9 L855.7 290.6 L857.6 286.9 L860 283.1 L862.1 279.3 L863.6 282.3 L865.1 286.3 L866.8 285.8 L871.3 284.1 L875.3 282.6 L880.3 280.8 L886.7 279.1 L891.3 278.9 L894.3 279.5 L896.8 283.3 L899.8 290.6 L901.3 298.3 L902.6 307.3 L903.9 317.3 L905.2 326.3 L906.8 320.3 L909.2 312.2 L911.1 304.3 L912.9 297.2 L914.8 289.3 L916.3 287.1 L918 287 L924 286.3 L930 285.6 L936 283.8 L941 282.5 L950 282 L957 282 L962 283 L966 284.8 L970 283 L977 281.3 L986 281.5" transform="translate(0 2)"/><path d="M852.5 309.3 L853.9 300.9 L855.7 290.6 L857.6 286.9 L860 283.1 L862.1 279.3 L863.6 282.3 L865.1 286.3 L866.8 285.8 L871.3 284.1 L875.3 282.6 L880.3 280.8 L886.7 279.1 L891.3 278.9 L894.3 279.5 L896.8 283.3 L899.8 290.6 L901.3 298.3 L902.6 307.3 L903.9 317.3 L905.2 326.3 L906.8 320.3 L909.2 312.2 L911.1 304.3 L912.9 297.2 L914.8 289.3 L916.3 287.1 L918 287 L924 286.3 L930 285.6 L936 283.8 L941 282.5 L950 282 L957 282 L962 283 L966 284.8 L970 283 L977 281.3 L986 281.5" transform="translate(0 3)"/></g>
<g stroke="#ff50ff" stroke-width="1.5" fill="none" stroke-linejoin="round" stroke-linecap="round" ><path d="M533.2 310 L534.6 301.6 L536.4 291.3 L538.3 287.6 L540.7 283.8 L542.8 280 L544.3 283 L545.8 287 L547.5 286.5 L552 284.8 L556 283.3 L561 281.5 L567.4 279.8 L572 279.6 L575 280.2 L577.5 284 L580.5 291.3 L582 299 L583.3 308 L584.6 318 L585.9 327 L587.5 321 L589.9 312.9 L591.8 305 L593.6 297.9 L595.5 290 L597 287.8 L599.2 287 L602 287.3 L605 287.4 L610 285.4 L616 283 L623 282.5 L630 281.5 L638 280.5 L644 281 L649 283 L653 281 L656.6 279.5 L665 280.5 L676 282 L686 282 L689.5 282.5" transform="translate(0 -2.2)"/><path d="M533.2 310 L534.6 301.6 L536.4 291.3 L538.3 287.6 L540.7 283.8 L542.8 280 L544.3 283 L545.8 287 L547.5 286.5 L552 284.8 L556 283.3 L561 281.5 L567.4 279.8 L572 279.6 L575 280.2 L577.5 284 L580.5 291.3 L582 299 L583.3 308 L584.6 318 L585.9 327 L587.5 321 L589.9 312.9 L591.8 305 L593.6 297.9 L595.5 290 L597 287.8 L599.2 287 L602 287.3 L605 287.4 L610 285.4 L616 283 L623 282.5 L630 281.5 L638 280.5 L644 281 L649 283 L653 281 L656.6 279.5 L665 280.5 L676 282 L686 282 L689.5 282.5" transform="translate(0 -1.1)"/><path d="M533.2 310 L534.6 301.6 L536.4 291.3 L538.3 287.6 L540.7 283.8 L542.8 280 L544.3 283 L545.8 287 L547.5 286.5 L552 284.8 L556 283.3 L561 281.5 L567.4 279.8 L572 279.6 L575 280.2 L577.5 284 L580.5 291.3 L582 299 L583.3 308 L584.6 318 L585.9 327 L587.5 321 L589.9 312.9 L591.8 305 L593.6 297.9 L595.5 290 L597 287.8 L599.2 287 L602 287.3 L605 287.4 L610 285.4 L616 283 L623 282.5 L630 281.5 L638 280.5 L644 281 L649 283 L653 281 L656.6 279.5 L665 280.5 L676 282 L686 282 L689.5 282.5" transform="translate(0 0)"/><path d="M533.2 310 L534.6 301.6 L536.4 291.3 L538.3 287.6 L540.7 283.8 L542.8 280 L544.3 283 L545.8 287 L547.5 286.5 L552 284.8 L556 283.3 L561 281.5 L567.4 279.8 L572 279.6 L575 280.2 L577.5 284 L580.5 291.3 L582 299 L583.3 308 L584.6 318 L585.9 327 L587.5 321 L589.9 312.9 L591.8 305 L593.6 297.9 L595.5 290 L597 287.8 L599.2 287 L602 287.3 L605 287.4 L610 285.4 L616 283 L623 282.5 L630 281.5 L638 280.5 L644 281 L649 283 L653 281 L656.6 279.5 L665 280.5 L676 282 L686 282 L689.5 282.5" transform="translate(0 1.1)"/><path d="M533.2 310 L534.6 301.6 L536.4 291.3 L538.3 287.6 L540.7 283.8 L542.8 280 L544.3 283 L545.8 287 L547.5 286.5 L552 284.8 L556 283.3 L561 281.5 L567.4 279.8 L572 279.6 L575 280.2 L577.5 284 L580.5 291.3 L582 299 L583.3 308 L584.6 318 L585.9 327 L587.5 321 L589.9 312.9 L591.8 305 L593.6 297.9 L595.5 290 L597 287.8 L599.2 287 L602 287.3 L605 287.4 L610 285.4 L616 283 L623 282.5 L630 281.5 L638 280.5 L644 281 L649 283 L653 281 L656.6 279.5 L665 280.5 L676 282 L686 282 L689.5 282.5" transform="translate(0 2.2)"/></g>
<g stroke="#ff50ff" stroke-width="1.5" fill="none" stroke-linejoin="round" stroke-linecap="round" ><path d="M852.5 309.3 L853.9 300.9 L855.7 290.6 L857.6 286.9 L860 283.1 L862.1 279.3 L863.6 282.3 L865.1 286.3 L866.8 285.8 L871.3 284.1 L875.3 282.6 L880.3 280.8 L886.7 279.1 L891.3 278.9 L894.3 279.5 L896.8 283.3 L899.8 290.6 L901.3 298.3 L902.6 307.3 L903.9 317.3 L905.2 326.3 L906.8 320.3 L909.2 312.2 L911.1 304.3 L912.9 297.2 L914.8 289.3 L916.3 287.1 L918 287 L924 286.3 L930 285.6 L936 283.8 L941 282.5 L950 282 L957 282 L962 283 L966 284.8 L970 283 L977 281.3 L986 281.5" transform="translate(0 -2.2)"/><path d="M852.5 309.3 L853.9 300.9 L855.7 290.6 L857.6 286.9 L860 283.1 L862.1 279.3 L863.6 282.3 L865.1 286.3 L866.8 285.8 L871.3 284.1 L875.3 282.6 L880.3 280.8 L886.7 279.1 L891.3 278.9 L894.3 279.5 L896.8 283.3 L899.8 290.6 L901.3 298.3 L902.6 307.3 L903.9 317.3 L905.2 326.3 L906.8 320.3 L909.2 312.2 L911.1 304.3 L912.9 297.2 L914.8 289.3 L916.3 287.1 L918 287 L924 286.3 L930 285.6 L936 283.8 L941 282.5 L950 282 L957 282 L962 283 L966 284.8 L970 283 L977 281.3 L986 281.5" transform="translate(0 -1.1)"/><path d="M852.5 309.3 L853.9 300.9 L855.7 290.6 L857.6 286.9 L860 283.1 L862.1 279.3 L863.6 282.3 L865.1 286.3 L866.8 285.8 L871.3 284.1 L875.3 282.6 L880.3 280.8 L886.7 279.1 L891.3 278.9 L894.3 279.5 L896.8 283.3 L899.8 290.6 L901.3 298.3 L902.6 307.3 L903.9 317.3 L905.2 326.3 L906.8 320.3 L909.2 312.2 L911.1 304.3 L912.9 297.2 L914.8 289.3 L916.3 287.1 L918 287 L924 286.3 L930 285.6 L936 283.8 L941 282.5 L950 282 L957 282 L962 283 L966 284.8 L970 283 L977 281.3 L986 281.5" transform="translate(0 0)"/><path d="M852.5 309.3 L853.9 300.9 L855.7 290.6 L857.6 286.9 L860 283.1 L862.1 279.3 L863.6 282.3 L865.1 286.3 L866.8 285.8 L871.3 284.1 L875.3 282.6 L880.3 280.8 L886.7 279.1 L891.3 278.9 L894.3 279.5 L896.8 283.3 L899.8 290.6 L901.3 298.3 L902.6 307.3 L903.9 317.3 L905.2 326.3 L906.8 320.3 L909.2 312.2 L911.1 304.3 L912.9 297.2 L914.8 289.3 L916.3 287.1 L918 287 L924 286.3 L930 285.6 L936 283.8 L941 282.5 L950 282 L957 282 L962 283 L966 284.8 L970 283 L977 281.3 L986 281.5" transform="translate(0 1.1)"/><path d="M852.5 309.3 L853.9 300.9 L855.7 290.6 L857.6 286.9 L860 283.1 L862.1 279.3 L863.6 282.3 L865.1 286.3 L866.8 285.8 L871.3 284.1 L875.3 282.6 L880.3 280.8 L886.7 279.1 L891.3 278.9 L894.3 279.5 L896.8 283.3 L899.8 290.6 L901.3 298.3 L902.6 307.3 L903.9 317.3 L905.2 326.3 L906.8 320.3 L909.2 312.2 L911.1 304.3 L912.9 297.2 L914.8 289.3 L916.3 287.1 L918 287 L924 286.3 L930 285.6 L936 283.8 L941 282.5 L950 282 L957 282 L962 283 L966 284.8 L970 283 L977 281.3 L986 281.5" transform="translate(0 2.2)"/></g>
<g stroke="#d01818" stroke-width="1.2" fill="none" stroke-linejoin="round" stroke-linecap="round" ><path d="M533.2 310 L534.6 301.6 L536.4 291.3 L538.3 287.6 L540.7 283.8 L542.8 280 L544.3 283 L545.8 287 L547.5 286.5 L552 284.8 L556 283.3 L561 281.5 L567.4 279.8 L572 279.6 L575 280.2 L577.5 284 L580.5 291.3 L582 299 L583.3 308 L584.6 318 L585.9 327 L587.5 321 L589.9 312.9 L591.8 305 L593.6 297.9 L595.5 290 L597 287.8 L599.2 287 L602 287.3 L605 287.4 L610 285.4 L616 283 L623 282.5 L630 281.5 L638 280.5 L644 281 L649 283 L653 281 L656.6 279.5 L665 280.5 L676 282 L686 282 L689.5 282.5" transform="translate(0 -1.5)"/><path d="M533.2 310 L534.6 301.6 L536.4 291.3 L538.3 287.6 L540.7 283.8 L542.8 280 L544.3 283 L545.8 287 L547.5 286.5 L552 284.8 L556 283.3 L561 281.5 L567.4 279.8 L572 279.6 L575 280.2 L577.5 284 L580.5 291.3 L582 299 L583.3 308 L584.6 318 L585.9 327 L587.5 321 L589.9 312.9 L591.8 305 L593.6 297.9 L595.5 290 L597 287.8 L599.2 287 L602 287.3 L605 287.4 L610 285.4 L616 283 L623 282.5 L630 281.5 L638 280.5 L644 281 L649 283 L653 281 L656.6 279.5 L665 280.5 L676 282 L686 282 L689.5 282.5" transform="translate(0 -0.5)"/><path d="M533.2 310 L534.6 301.6 L536.4 291.3 L538.3 287.6 L540.7 283.8 L542.8 280 L544.3 283 L545.8 287 L547.5 286.5 L552 284.8 L556 283.3 L561 281.5 L567.4 279.8 L572 279.6 L575 280.2 L577.5 284 L580.5 291.3 L582 299 L583.3 308 L584.6 318 L585.9 327 L587.5 321 L589.9 312.9 L591.8 305 L593.6 297.9 L595.5 290 L597 287.8 L599.2 287 L602 287.3 L605 287.4 L610 285.4 L616 283 L623 282.5 L630 281.5 L638 280.5 L644 281 L649 283 L653 281 L656.6 279.5 L665 280.5 L676 282 L686 282 L689.5 282.5" transform="translate(0 0.5)"/><path d="M533.2 310 L534.6 301.6 L536.4 291.3 L538.3 287.6 L540.7 283.8 L542.8 280 L544.3 283 L545.8 287 L547.5 286.5 L552 284.8 L556 283.3 L561 281.5 L567.4 279.8 L572 279.6 L575 280.2 L577.5 284 L580.5 291.3 L582 299 L583.3 308 L584.6 318 L585.9 327 L587.5 321 L589.9 312.9 L591.8 305 L593.6 297.9 L595.5 290 L597 287.8 L599.2 287 L602 287.3 L605 287.4 L610 285.4 L616 283 L623 282.5 L630 281.5 L638 280.5 L644 281 L649 283 L653 281 L656.6 279.5 L665 280.5 L676 282 L686 282 L689.5 282.5" transform="translate(0 1.5)"/></g>
<g stroke="#d01818" stroke-width="1.2" fill="none" stroke-linejoin="round" stroke-linecap="round" ><path d="M852.5 309.3 L853.9 300.9 L855.7 290.6 L857.6 286.9 L860 283.1 L862.1 279.3 L863.6 282.3 L865.1 286.3 L866.8 285.8 L871.3 284.1 L875.3 282.6 L880.3 280.8 L886.7 279.1 L891.3 278.9 L894.3 279.5 L896.8 283.3 L899.8 290.6 L901.3 298.3 L902.6 307.3 L903.9 317.3 L905.2 326.3 L906.8 320.3 L909.2 312.2 L911.1 304.3 L912.9 297.2 L914.8 289.3 L916.3 287.1 L918 287 L924 286.3 L930 285.6 L936 283.8 L941 282.5 L950 282 L957 282 L962 283 L966 284.8 L970 283 L977 281.3 L986 281.5" transform="translate(0 -1.5)"/><path d="M852.5 309.3 L853.9 300.9 L855.7 290.6 L857.6 286.9 L860 283.1 L862.1 279.3 L863.6 282.3 L865.1 286.3 L866.8 285.8 L871.3 284.1 L875.3 282.6 L880.3 280.8 L886.7 279.1 L891.3 278.9 L894.3 279.5 L896.8 283.3 L899.8 290.6 L901.3 298.3 L902.6 307.3 L903.9 317.3 L905.2 326.3 L906.8 320.3 L909.2 312.2 L911.1 304.3 L912.9 297.2 L914.8 289.3 L916.3 287.1 L918 287 L924 286.3 L930 285.6 L936 283.8 L941 282.5 L950 282 L957 282 L962 283 L966 284.8 L970 283 L977 281.3 L986 281.5" transform="translate(0 -0.5)"/><path d="M852.5 309.3 L853.9 300.9 L855.7 290.6 L857.6 286.9 L860 283.1 L862.1 279.3 L863.6 282.3 L865.1 286.3 L866.8 285.8 L871.3 284.1 L875.3 282.6 L880.3 280.8 L886.7 279.1 L891.3 278.9 L894.3 279.5 L896.8 283.3 L899.8 290.6 L901.3 298.3 L902.6 307.3 L903.9 317.3 L905.2 326.3 L906.8 320.3 L909.2 312.2 L911.1 304.3 L912.9 297.2 L914.8 289.3 L916.3 287.1 L918 287 L924 286.3 L930 285.6 L936 283.8 L941 282.5 L950 282 L957 282 L962 283 L966 284.8 L970 283 L977 281.3 L986 281.5" transform="translate(0 0.5)"/><path d="M852.5 309.3 L853.9 300.9 L855.7 290.6 L857.6 286.9 L860 283.1 L862.1 279.3 L863.6 282.3 L865.1 286.3 L866.8 285.8 L871.3 284.1 L875.3 282.6 L880.3 280.8 L886.7 279.1 L891.3 278.9 L894.3 279.5 L896.8 283.3 L899.8 290.6 L901.3 298.3 L902.6 307.3 L903.9 317.3 L905.2 326.3 L906.8 320.3 L909.2 312.2 L911.1 304.3 L912.9 297.2 L914.8 289.3 L916.3 287.1 L918 287 L924 286.3 L930 285.6 L936 283.8 L941 282.5 L950 282 L957 282 L962 283 L966 284.8 L970 283 L977 281.3 L986 281.5" transform="translate(0 1.5)"/></g>
<g stroke="#ff8c00" stroke-width="1.2" fill="none" stroke-linejoin="round" stroke-linecap="round" ><path d="M533.2 310 L534.6 301.6 L536.4 291.3 L538.3 287.6 L540.7 283.8 L542.8 280 L544.3 283 L545.8 287 L547.5 286.5 L552 284.8 L556 283.3 L561 281.5 L567.4 279.8 L572 279.6 L575 280.2 L577.5 284 L580.5 291.3 L582 299 L583.3 308 L584.6 318 L585.9 327 L587.5 321 L589.9 312.9 L591.8 305 L593.6 297.9 L595.5 290 L597 287.8 L599.2 287 L602 287.3 L605 287.4 L610 285.4 L616 283 L623 282.5 L630 281.5 L638 280.5 L644 281 L649 283 L653 281 L656.6 279.5 L665 280.5 L676 282 L686 282 L689.5 282.5" transform="translate(0 -0.8)"/><path d="M533.2 310 L534.6 301.6 L536.4 291.3 L538.3 287.6 L540.7 283.8 L542.8 280 L544.3 283 L545.8 287 L547.5 286.5 L552 284.8 L556 283.3 L561 281.5 L567.4 279.8 L572 279.6 L575 280.2 L577.5 284 L580.5 291.3 L582 299 L583.3 308 L584.6 318 L585.9 327 L587.5 321 L589.9 312.9 L591.8 305 L593.6 297.9 L595.5 290 L597 287.8 L599.2 287 L602 287.3 L605 287.4 L610 285.4 L616 283 L623 282.5 L630 281.5 L638 280.5 L644 281 L649 283 L653 281 L656.6 279.5 L665 280.5 L676 282 L686 282 L689.5 282.5" transform="translate(0 0)"/><path d="M533.2 310 L534.6 301.6 L536.4 291.3 L538.3 287.6 L540.7 283.8 L542.8 280 L544.3 283 L545.8 287 L547.5 286.5 L552 284.8 L556 283.3 L561 281.5 L567.4 279.8 L572 279.6 L575 280.2 L577.5 284 L580.5 291.3 L582 299 L583.3 308 L584.6 318 L585.9 327 L587.5 321 L589.9 312.9 L591.8 305 L593.6 297.9 L595.5 290 L597 287.8 L599.2 287 L602 287.3 L605 287.4 L610 285.4 L616 283 L623 282.5 L630 281.5 L638 280.5 L644 281 L649 283 L653 281 L656.6 279.5 L665 280.5 L676 282 L686 282 L689.5 282.5" transform="translate(0 0.8)"/></g>
<g stroke="#ff8c00" stroke-width="1.2" fill="none" stroke-linejoin="round" stroke-linecap="round" ><path d="M852.5 309.3 L853.9 300.9 L855.7 290.6 L857.6 286.9 L860 283.1 L862.1 279.3 L863.6 282.3 L865.1 286.3 L866.8 285.8 L871.3 284.1 L875.3 282.6 L880.3 280.8 L886.7 279.1 L891.3 278.9 L894.3 279.5 L896.8 283.3 L899.8 290.6 L901.3 298.3 L902.6 307.3 L903.9 317.3 L905.2 326.3 L906.8 320.3 L909.2 312.2 L911.1 304.3 L912.9 297.2 L914.8 289.3 L916.3 287.1 L918 287 L924 286.3 L930 285.6 L936 283.8 L941 282.5 L950 282 L957 282 L962 283 L966 284.8 L970 283 L977 281.3 L986 281.5" transform="translate(0 -0.8)"/><path d="M852.5 309.3 L853.9 300.9 L855.7 290.6 L857.6 286.9 L860 283.1 L862.1 279.3 L863.6 282.3 L865.1 286.3 L866.8 285.8 L871.3 284.1 L875.3 282.6 L880.3 280.8 L886.7 279.1 L891.3 278.9 L894.3 279.5 L896.8 283.3 L899.8 290.6 L901.3 298.3 L902.6 307.3 L903.9 317.3 L905.2 326.3 L906.8 320.3 L909.2 312.2 L911.1 304.3 L912.9 297.2 L914.8 289.3 L916.3 287.1 L918 287 L924 286.3 L930 285.6 L936 283.8 L941 282.5 L950 282 L957 282 L962 283 L966 284.8 L970 283 L977 281.3 L986 281.5" transform="translate(0 0)"/><path d="M852.5 309.3 L853.9 300.9 L855.7 290.6 L857.6 286.9 L860 283.1 L862.1 279.3 L863.6 282.3 L865.1 286.3 L866.8 285.8 L871.3 284.1 L875.3 282.6 L880.3 280.8 L886.7 279.1 L891.3 278.9 L894.3 279.5 L896.8 283.3 L899.8 290.6 L901.3 298.3 L902.6 307.3 L903.9 317.3 L905.2 326.3 L906.8 320.3 L909.2 312.2 L911.1 304.3 L912.9 297.2 L914.8 289.3 L916.3 287.1 L918 287 L924 286.3 L930 285.6 L936 283.8 L941 282.5 L950 282 L957 282 L962 283 L966 284.8 L970 283 L977 281.3 L986 281.5" transform="translate(0 0.8)"/></g>
<path d="M104 466.5H983" stroke="#e8800a" stroke-width="1" shape-rendering="crispEdges"/>
</g>
<rect x="526.500" y="366.500" width="11" height="11" fill="#ff8c00"/>
<path d="M691 366.500l5 5.500l-5 5.500l-5 -5.500z" fill="#ff8c00"/>
<path d="M527 108.500h9.500l-4.750 5z" fill="#ff8c00"/>
<path d="M527 604.500h9.500l-4.750 -5z" fill="#ff8c00"/>
<text x="85" y="474" font-family="Liberation Sans,sans-serif" font-size="15" fill="#f08808" textLength="8.5" lengthAdjust="spacingAndGlyphs">A</text><text x="94" y="474" font-family="Liberation Sans,sans-serif" font-size="11" fill="#f08808">Y</text>
<text x="965" y="280" font-family="Liberation Sans,sans-serif" font-size="13" fill="#e8800a">Px</text>
<path d="M987 356.500l5.500 -4.500v9z" fill="#40ff00"/><path d="M992 356.500H997.500" stroke="#40ff00" stroke-width="1.400"/>
<text x="1004.500" y="359" font-family="Liberation Sans,sans-serif" font-weight="bold" font-size="12" fill="#40ff00">T</text>
<path d="M987 371.500l5.500 -4.500v9z" fill="#40ff00"/><path d="M992 371.500H996.500V380M993 380.500H1000.500M994.500 382.500H999M995.500 384.500H998" stroke="#40ff00" stroke-width="1.200" fill="none"/>
<text x="998.500" y="379.500" font-family="Liberation Sans,sans-serif" font-size="12.500" fill="#40ff00">2</text>
<path d="M996.500 586V600" stroke="#2a6cff" stroke-width="1.200"/><path d="M992 599h9.500l-4.750 5.500z" fill="#2a6cff"/>
<text x="998.500" y="597.500" font-family="Liberation Sans,sans-serif" font-size="12.500" fill="#2a6cff">3</text>
</svg>
<!-- bottom toolbar row -->
<div class="a" style="left:77px;top:609px;width:942px;height:64px;background:#eae8e4;border-left:1px solid #fafafa;border-top:1px solid #fcfcfc;"></div>
<div class="sunk" style="left:80px;top:615px;width:15px;height:18px"><svg width="13" height="16" viewBox="0 0 13 16" style="position:absolute;left:0;top:0"><path d="M6.5 3V14" stroke="#000" stroke-width="1.3"/><path d="M6.5 2l3 3.5h-6z" fill="#000"/></svg></div>
<div class="btn" style="left:102px;top:614px;width:25px;height:12px"><svg width="23" height="10" viewBox="0 0 23 10" style="position:absolute;left:0;top:0"><path d="M8 5l3.5 -3l3.5 3M8 8l3.5 -3l3.5 3" stroke="#333" stroke-width="1.2" fill="none"/></svg></div>
<div class="btn" style="left:102px;top:629px;width:25px;height:12px"><svg width="23" height="10" viewBox="0 0 23 10" style="position:absolute;left:0;top:0"><path d="M8 2l3.5 3l3.5 -3M8 5l3.5 3l3.5 -3" stroke="#333" stroke-width="1.2" fill="none"/></svg></div>
<div class="btn" style="left:130px;top:614px;width:18px;height:27px"><svg width="16" height="25" viewBox="0 0 16 25" style="position:absolute;left:0;top:0"><path d="M4.5 6.5l3.5 -3l3.5 3M4.5 9.5l3.5 -3l3.5 3M4.5 15.5l3.5 3l3.5 -3M4.5 18.500l3.5 3l3.5 -3" stroke="#333" stroke-width="1.2" fill="none"/></svg></div>

<div class="btn" style="left:166px;top:614px;width:25px;height:27px"><svg width="23" height="25" viewBox="0 0 23 25" style="position:absolute;left:0;top:0"><path d="M8 4.5h7l4.5 4.5v7l-4.5 4.5h-7l-4.500 -4.500v-7z" fill="#00aaaa" stroke="#003838" stroke-width="0.8"/></svg></div>
<div class="btn" style="left:193px;top:614px;width:25px;height:27px;background:linear-gradient(#c8c8c8,#f4f4f4 40%,#fff);"><svg width="23" height="25" viewBox="0 0 23 25" style="position:absolute;left:0;top:0"><path d="M8.500 5h7l4.500 4.500v7l-4.500 4.500h-7l-4.500 -4.500v-7z" fill="#ff0000" stroke="#300" stroke-width="0.8"/></svg></div>
<div class="btn" style="left:220px;top:614px;width:25px;height:27px"><svg width="23" height="25" viewBox="0 0 23 25" style="position:absolute;left:0;top:0"><path d="M8 4.500h7l4.500 4.500v7l-4.500 4.500h-7l-4.500 -4.500v-7z" fill="#ffff00" stroke="#333300" stroke-width="0.8"/></svg></div>

<div class="btn" style="left:259px;top:614px;width:25px;height:27px"><svg width="23" height="25" viewBox="0 0 23 25" style="position:absolute;left:0;top:0"><rect x="2" y="4" width="19" height="16.500" fill="#fff" stroke="#000" stroke-width="1.2"/><path d="M21 10v10.500h-12z" fill="#888"/><path d="M4.500 10C6 5.500 12 5.500 15 10" stroke="#000" stroke-width="1.3" fill="none"/><path d="M17.500 12.500l-5.500 -0.500l4.500 -4.500z" fill="#000"/></svg></div>
<div class="btn" style="left:286px;top:614px;width:25px;height:27px"><svg width="23" height="25" viewBox="0 0 23 25" style="position:absolute;left:0;top:0"><path d="M10 8l4 -3.500h6l-4 4z" fill="#fff" stroke="#333" stroke-width="0.8"/><path d="M2.500 12l8 -5l9 3.500l-8 5.500z" fill="#c8c8c8" stroke="#444" stroke-width="0.8"/><path d="M2.500 12v4l9 4.500v-4.500zM11.500 16l8 -5.500v4l-8 6z" fill="#8c8c8c" stroke="#444" stroke-width="0.8"/><path d="M2.500 16v2l9 4.500l8 -6v-2" fill="none" stroke="#444" stroke-width="0.8"/><rect x="7" y="10.500" width="2" height="1.500" fill="#0c0"/><rect x="9.500" y="11" width="2" height="1.500" fill="#e00"/></svg></div>
<div class="btn" style="left:313px;top:614px;width:25px;height:27px"><svg width="23" height="25" viewBox="0 0 23 25" style="position:absolute;left:0;top:0"><path d="M11.500 3.500v18M2.500 12.500h18M4.500 5.500l14 14M18.500 5.500l-14 14" stroke="#222" stroke-width="1"/><circle cx="11.500" cy="12.500" r="6.200" fill="#f0f0f0"/><circle cx="11.500" cy="12.500" r="4.300" fill="#ffff00" stroke="#333" stroke-width="0.9"/></svg></div>

<div class="btn" style="left:352px;top:614px;width:25px;height:27px;border-radius:3px"><div class="a" style="left:2px;top:2px;width:19px;height:21px;background:#000;color:#fff;font-size:21px;line-height:21px;text-align:center">H</div></div>
<div class="vbox w" style="left:378px;top:612px;width:101px;height:33px;padding:3px 0 0 7px;color:#fff">5.00 ns/</div>
<div class="btn" style="left:481px;top:613px;width:19px;height:30px"><svg width="17" height="28" viewBox="0 0 17 28" style="position:absolute;left:0;top:0"><path d="M5 15C5 7 8.500 7 8.500 14C8.500 21 12 21 12 13" stroke="#000" stroke-width="1.300" fill="none"/></svg></div>
<div class="btn" style="left:502px;top:613px;width:19px;height:30px"><svg width="17" height="28" viewBox="0 0 17 28" style="position:absolute;left:0;top:0"><path d="M2 15C3 7 6.500 7 8.500 14C10.500 21 14 21 15 13" stroke="#000" stroke-width="1.300" fill="none"/></svg></div>
<div class="a" style="left:525px;top:615px;width:16px;height:18px;background:#ff8c00;border:1px solid #f8f8f8"><svg width="14" height="16" viewBox="0 0 14 16" style="position:absolute;left:0;top:0"><path d="M7 3V14" stroke="#000" stroke-width="1.300"/><path d="M7 2l3 3.500h-6z" fill="#000"/></svg></div>
<div class="vbox" style="left:545px;top:612px;width:151px;height:33px;padding:3px 0 0 7px;color:#fff">111.2 ps</div>
<div class="btn" style="left:697px;top:613px;width:19px;height:30px"><svg width="17" height="28" viewBox="0 0 17 28" style="position:absolute;left:0;top:0"><path d="M4.500 14l7 -6v12z" fill="#000"/></svg></div>
<div class="btn" style="left:718px;top:613px;width:19px;height:30px;font-size:15px;line-height:28px;text-align:center;font-weight:bold"><span style="display:inline-block;transform:scaleX(.85)">0</span></div>
<div class="btn" style="left:739px;top:613px;width:19px;height:30px"><svg width="17" height="28" viewBox="0 0 17 28" style="position:absolute;left:0;top:0"><path d="M12.500 14l-7 -6v12z" fill="#000"/></svg></div>

<div class="btn" style="left:825px;top:614px;width:25px;height:27px;border-radius:3px"><div class="a g" style="left:2px;top:2px;width:19px;height:21px;background:#000;font-size:21px;line-height:21px;text-align:center">T</div></div>
<div class="vbox g" style="left:851px;top:612px;width:89px;height:33px;padding:3px 0 0 6px">48 mV</div>
<div class="btn" style="left:941px;top:613px;width:26px;height:14px"><svg width="24" height="12" viewBox="0 0 24 12" style="position:absolute;left:0;top:0"><path d="M12 2.500l5.500 6h-11z" fill="#000"/></svg></div>
<div class="btn" style="left:941px;top:629px;width:26px;height:14px"><svg width="24" height="12" viewBox="0 0 24 12" style="position:absolute;left:0;top:0"><path d="M12 9l5.500 -6h-11z" fill="#000"/></svg></div>
<div class="sunk" style="left:976px;top:615px;width:15px;height:18px"><svg width="13" height="16" viewBox="0 0 13 16" style="position:absolute;left:0;top:0"><path d="M6.500 3V14" stroke="#000" stroke-width="1.300"/><path d="M6.500 2l3 3.500h-6z" fill="#000"/></svg></div>

<!-- tabs -->
<div class="a" style="left:82px;top:648px;width:113px;height:25px;background:#303030;border:2px solid #ff8c00;border-bottom:none;color:#fff;font-size:15px;line-height:23px;text-align:center;white-space:nowrap;letter-spacing:.3px">Measurements</div>
<div class="tab" style="left:196px;width:65px">Markers</div>
<div class="tab" style="left:262px;width:96px;letter-spacing:.4px">Color Grade</div>
<div class="tab" style="left:359px;width:55px">Status</div>
<div class="tab" style="left:415px;width:54px">Scales</div>

<!-- measurement panel -->
<div class="a" style="left:77px;top:673px;width:944px;height:92px;background:#303030;"></div>
<div class="a" style="left:77px;top:765px;width:947px;height:3px;background:#e4e2de;"></div>
<div class="a" style="left:78px;top:674px;width:19px;height:90px;background:#eceae6;"></div>
<div class="btn" style="left:78px;top:674px;width:19px;height:19px"><svg width="17" height="17" viewBox="0 0 17 17" style="position:absolute;left:0;top:0"><path d="M4.500 10.500l4 -4l4 4" stroke="#333" stroke-width="1.800" fill="none"/></svg></div>
<div class="btn" style="left:78px;top:694px;width:19px;height:10px"></div>
<div class="btn" style="left:78px;top:745px;width:19px;height:19px"><svg width="17" height="17" viewBox="0 0 17 17" style="position:absolute;left:0;top:0"><path d="M4.500 6.500l4 4l4 -4" stroke="#333" stroke-width="1.800" fill="none"/></svg></div>
<div class="a" style="left:104px;top:675px;width:135px;height:18px;background:#fff;"></div>
<div class="a mono" style="left:105.4px;top:676px;line-height:18px;color:#303030"> Meas All Edges</div>
<div class="a mono" style="left:104.5px;top:676px;line-height:18px;color:#f0f0f0">                   <span class="o">V p-p(</span><span class="g">2</span><span class="o">)</span>       Period(<span class="g">2</span><span class="o sym">■</span>)     Frequency(<span class="g">2</span><span class="o sym" style="font-size:13px">▼</span>)   Rise time(<span class="g">2</span><span class="o sym" style="font-size:9px;position:relative;top:-1px">●</span>)   Fall time(<span class="g">2</span><span class="o sym" style="font-size:15px">♦</span>)
        Current   613.34 mV       17.71282 ns     56.45628 MHz    324.34 ps       354.65 ps
           Mean   441.774 mV    ? 17.2623029 ns ? 65.030339 MHz ? 1.5060647 ns  ? 2.1977430 ns
            Min   25.71 mV      ? 910.21 ps     ? 22.117777 MHz ? 97.03 ps      ? 86.46 ps
            Max   629.15 mV     ? 45.21250 ns   ? 1.09865 GHz   ? 32.02688 ns   ? 42.53914 ns</div>
<div class="a" style="left:1001px;top:675px;width:18px;height:24px;background:#f4f4f2"></div><div class="btn" style="left:1002px;top:677px;width:16px;height:21px;border-radius:2px;font-size:17px;line-height:19px;text-align:center;">?</div>

</body>
</html>
